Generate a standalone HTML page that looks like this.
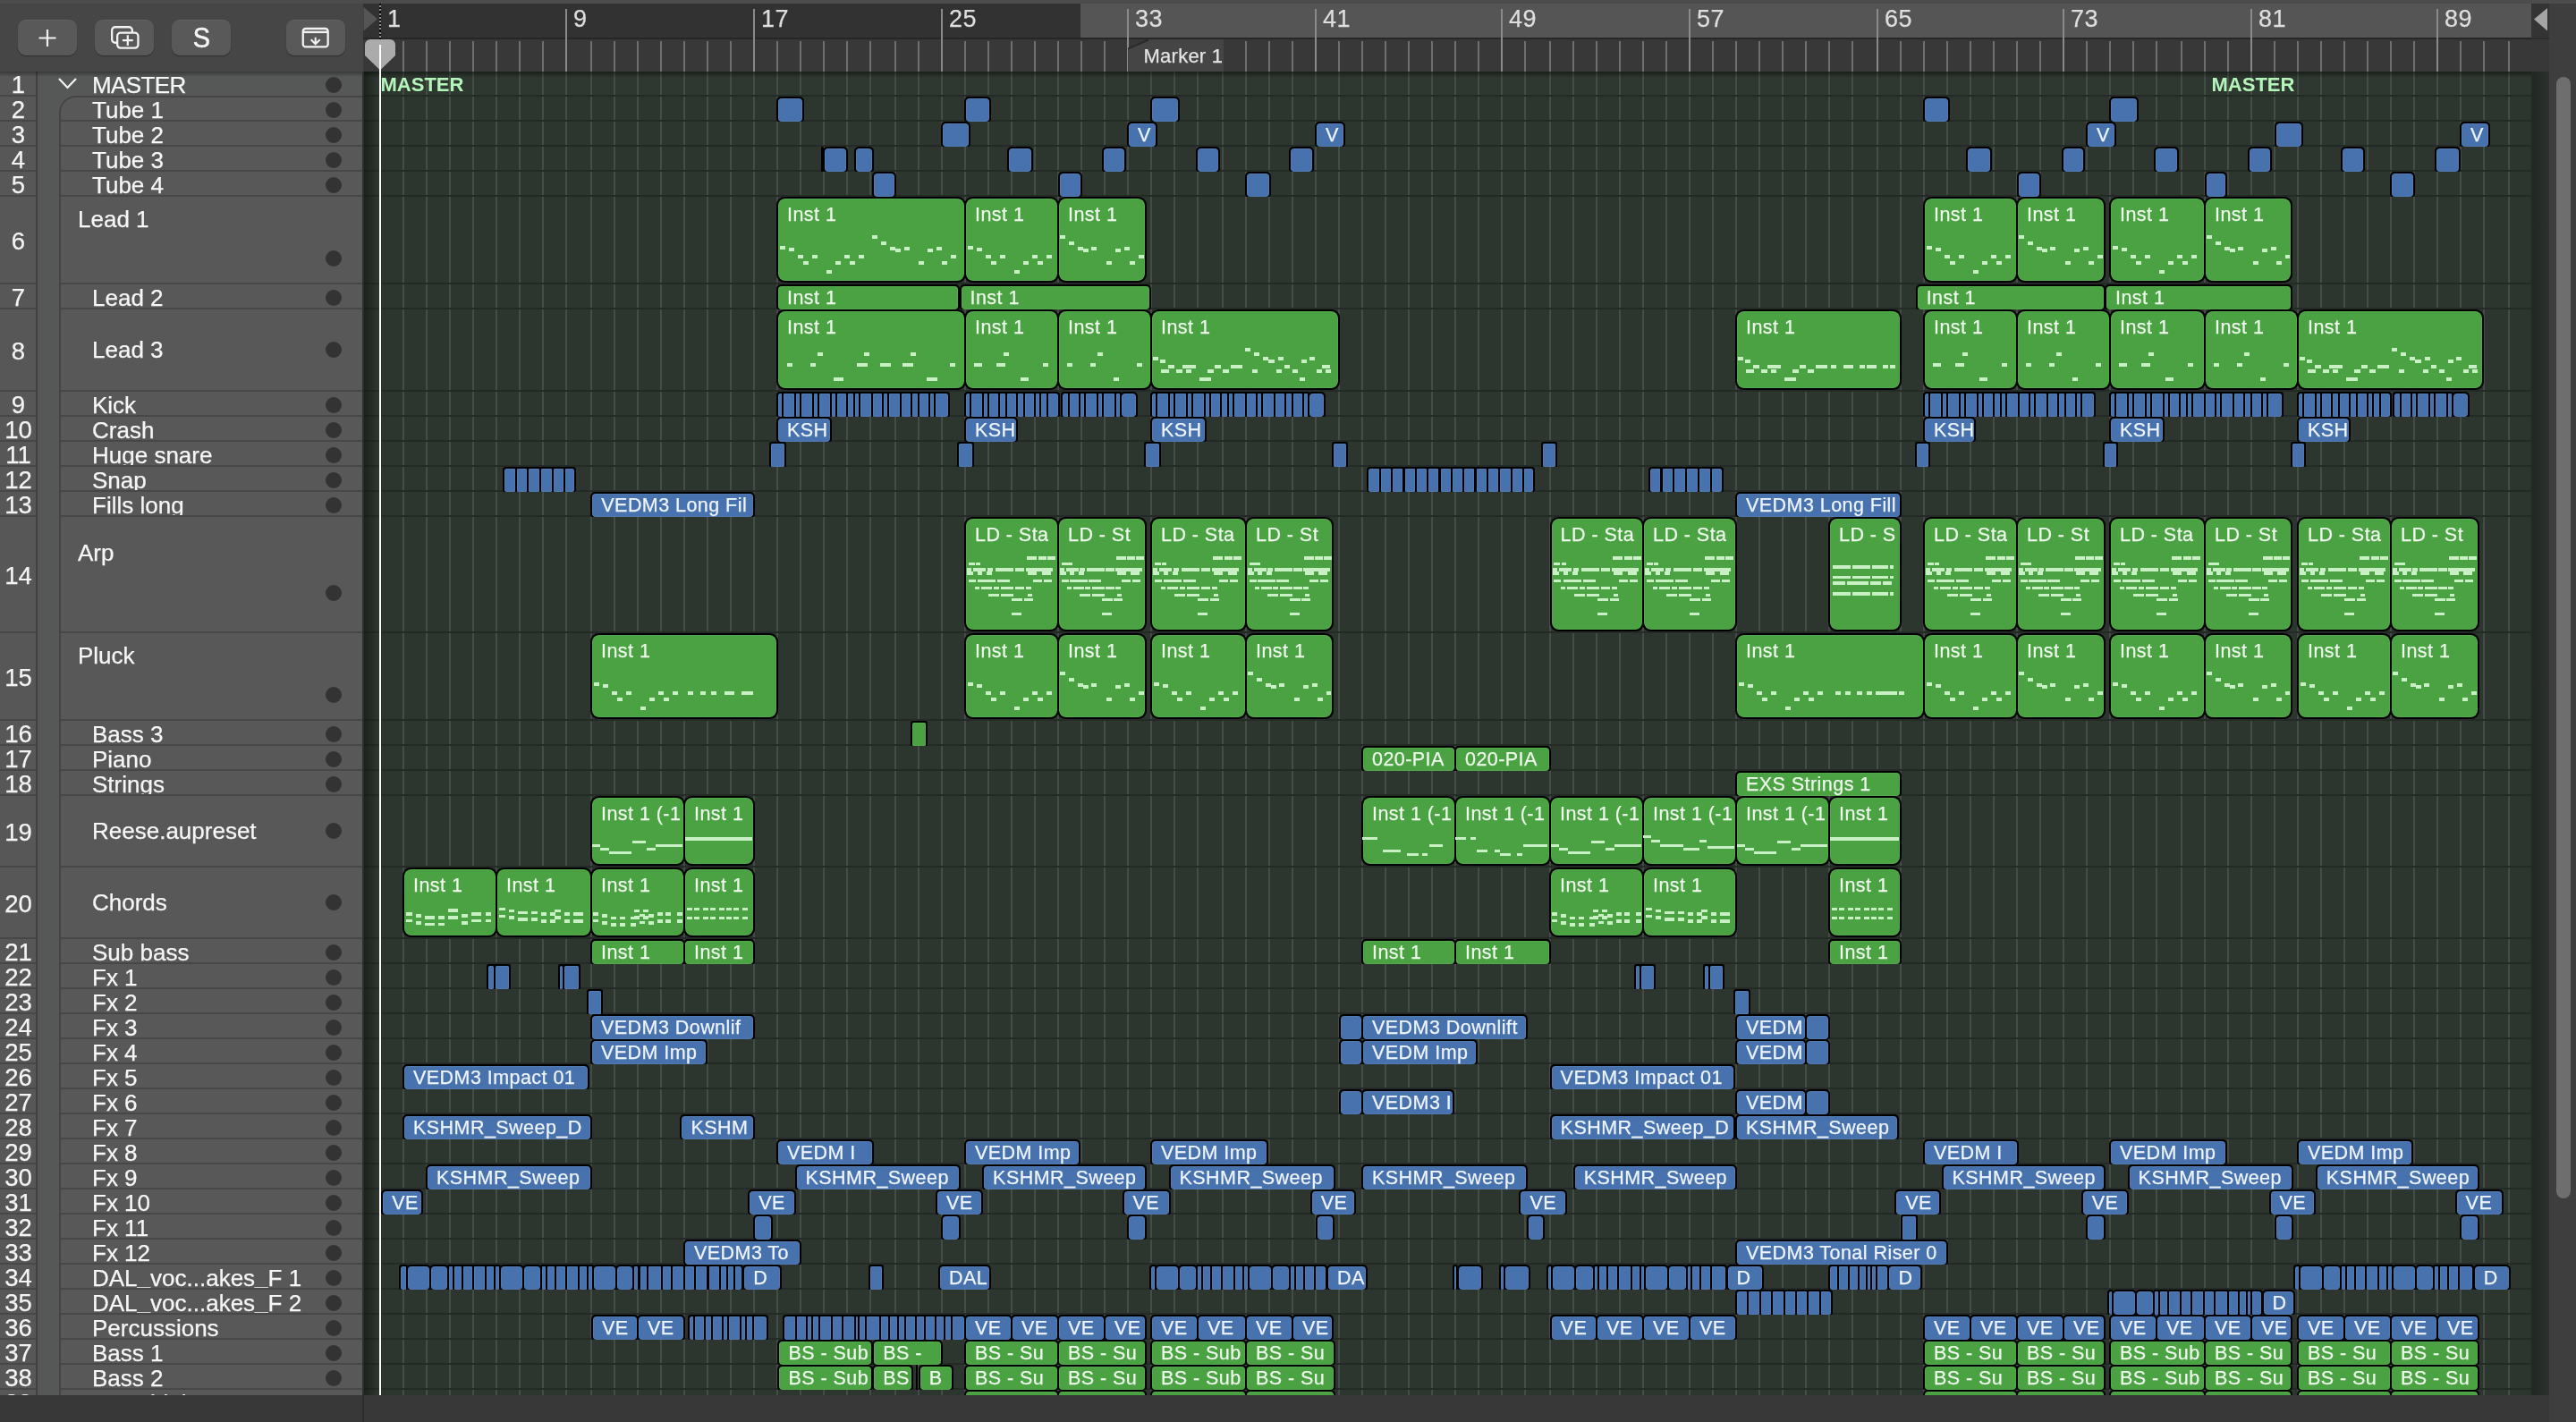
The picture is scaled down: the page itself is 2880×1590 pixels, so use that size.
<!DOCTYPE html><html><head><meta charset="utf-8"><title>Tracks</title><style>
*{margin:0;padding:0;box-sizing:border-box}
html,body{width:2880px;height:1590px;overflow:hidden;background:#383838}
body{position:relative;-webkit-text-stroke:.25px;will-change:transform;-webkit-font-smoothing:antialiased;font-family:"Liberation Sans",sans-serif;color:#f2f2f2}
div,i,b,s,u{position:absolute;display:block;font-style:normal;font-weight:normal;text-decoration:none}
#tl{left:406px;top:80px;width:2424px;height:1480px;background:#2c352e;overflow:hidden}
.v{top:0;width:2px;height:1480px;background:#434d45}
.h{left:0;width:2424px;height:2px;background:#242b26}
.r{background:#000;border-radius:5px 5px 3px 3px;overflow:hidden}
.r>i{left:2px;right:2px;top:2px;bottom:0;border-radius:4px;background:#4872ad;box-shadow:inset 0 0 0 1px rgba(255,255,255,.06)}
.r.g>i{background:#4ba243}
.r.c{border-radius:2.5px 2.5px 1.5px 1.5px}
.r.t{border-radius:9px}
.r.t>i{left:2px;right:2px;top:2px;bottom:2px;border-radius:8px}
.r>b{left:12px;top:1px;height:27px;line-height:28px;font-size:21.5px;letter-spacing:.45px;white-space:nowrap;color:#eef4fc}
.r.g>b{color:#eefaec}
.r.t>b{top:6px}
.r>u{background:#c8f0c4;height:4px}
#hd{left:0;top:80px;width:406px;height:1480px;background:#575757;overflow:hidden}
.n{left:0;width:41px;text-align:center;font-size:27.5px;letter-spacing:0;color:#f4f4f4;white-space:nowrap}
.nm{font-size:26px;letter-spacing:0;color:#f6f6f6;white-space:nowrap;overflow:hidden}
.dot{left:364px;width:18px;height:18px;border-radius:9px;background:#333}
.hl{height:2px;background:#474747}
.btn{top:22px;width:66px;height:40px;border-radius:9px;background:#595959;box-shadow:0 1px 1px rgba(0,0,0,.35),inset 0 1px 0 rgba(255,255,255,.06)}
.rn{top:5.5px;font-size:27px;color:#dedede;letter-spacing:.5px}
.tk{top:46px;width:2px;height:34px;background:#6f6f6f}
.tK{top:10px;width:2px;height:70px;background:#8a8a8a}
</style></head><body><div style="left:0;top:0;width:2880px;height:80px;background:#464646"></div><div style="left:0;top:0;width:2880px;height:4px;background:#4c4c4c"></div><div class="btn" style="left:20px"><svg width="66" height="40" viewBox="0 0 66 40"><path d="M33 11v19M23.5 20.500h19" stroke="#f0f0f0" stroke-width="2.200" fill="none"/></svg></div><div class="btn" style="left:106px"><svg width="66" height="40" viewBox="0 0 66 40"><g stroke="#f2f2f2" stroke-width="2.300" fill="none"><rect x="19.150" y="8.250" width="22.700" height="17.500" rx="3.600"/><rect x="25.150" y="14.650" width="23.300" height="17" rx="3.600" fill="#595959"/><path d="M36.800 17.300v11.800M30.900 23.200h11.800" stroke-width="2.200"/></g></svg></div><div class="btn" style="left:192px;text-align:center;line-height:41px;font-size:31px;color:#f6f6f6;-webkit-text-stroke:.55px"><span style="display:inline-block;transform:scaleX(.93)">S</span></div><div class="btn" style="left:320px"><svg width="66" height="40" viewBox="0 0 66 40"><g stroke="#f2f2f2" stroke-width="2.300" fill="none"><rect x="18.750" y="10" width="27.900" height="20.400" rx="3"/><path d="M18.750 13.900h27.900" stroke-width="2.400"/><path d="M32.700 19.800v7M27.700 22.300l5 5 5-5" stroke-width="2.100"/></g></svg></div><div style="left:406px;top:4px;width:2424px;height:39px;background:#323232"></div><div style="left:1208px;top:4px;width:1622px;height:39px;background:#555"></div><div style="left:406px;top:42px;width:2444px;height:2px;background:#272727"></div><div style="left:406px;top:44px;width:2444px;height:36px;background:#383838"></div><div style="left:2830px;top:4px;width:20px;height:39px;background:#343434"></div><div style="left:2850px;top:4px;width:30px;height:1586px;background:#3e3e3e"></div><div class="rn" style="left:433px">1</div><div class="tk" style="left:450px"></div><div class="tk" style="left:476px"></div><div class="tk" style="left:502px"></div><div class="tk" style="left:528px"></div><div class="tk" style="left:554px"></div><div class="tk" style="left:580px"></div><div class="tk" style="left:606px"></div><div class="tK" style="left:632px"></div><div class="rn" style="left:641px">9</div><div class="tk" style="left:660px"></div><div class="tk" style="left:686px"></div><div class="tk" style="left:712px"></div><div class="tk" style="left:738px"></div><div class="tk" style="left:764px"></div><div class="tk" style="left:790px"></div><div class="tk" style="left:816px"></div><div class="tK" style="left:842px"></div><div class="rn" style="left:851px">17</div><div class="tk" style="left:868px"></div><div class="tk" style="left:894px"></div><div class="tk" style="left:920px"></div><div class="tk" style="left:946px"></div><div class="tk" style="left:972px"></div><div class="tk" style="left:1000px"></div><div class="tk" style="left:1026px"></div><div class="tK" style="left:1052px"></div><div class="rn" style="left:1061px">25</div><div class="tk" style="left:1078px"></div><div class="tk" style="left:1104px"></div><div class="tk" style="left:1130px"></div><div class="tk" style="left:1156px"></div><div class="tk" style="left:1182px"></div><div class="tk" style="left:1208px"></div><div class="tk" style="left:1234px"></div><div class="tK" style="left:1260px"></div><div class="rn" style="left:1269px">33</div><div class="tk" style="left:1286px"></div><div class="tk" style="left:1312px"></div><div class="tk" style="left:1338px"></div><div class="tk" style="left:1366px"></div><div class="tk" style="left:1392px"></div><div class="tk" style="left:1418px"></div><div class="tk" style="left:1444px"></div><div class="tK" style="left:1470px"></div><div class="rn" style="left:1479px">41</div><div class="tk" style="left:1496px"></div><div class="tk" style="left:1522px"></div><div class="tk" style="left:1548px"></div><div class="tk" style="left:1574px"></div><div class="tk" style="left:1600px"></div><div class="tk" style="left:1626px"></div><div class="tk" style="left:1652px"></div><div class="tK" style="left:1678px"></div><div class="rn" style="left:1687px">49</div><div class="tk" style="left:1704px"></div><div class="tk" style="left:1732px"></div><div class="tk" style="left:1758px"></div><div class="tk" style="left:1784px"></div><div class="tk" style="left:1810px"></div><div class="tk" style="left:1836px"></div><div class="tk" style="left:1862px"></div><div class="tK" style="left:1888px"></div><div class="rn" style="left:1897px">57</div><div class="tk" style="left:1914px"></div><div class="tk" style="left:1940px"></div><div class="tk" style="left:1966px"></div><div class="tk" style="left:1992px"></div><div class="tk" style="left:2018px"></div><div class="tk" style="left:2044px"></div><div class="tk" style="left:2070px"></div><div class="tK" style="left:2098px"></div><div class="rn" style="left:2107px">65</div><div class="tk" style="left:2124px"></div><div class="tk" style="left:2150px"></div><div class="tk" style="left:2176px"></div><div class="tk" style="left:2202px"></div><div class="tk" style="left:2228px"></div><div class="tk" style="left:2254px"></div><div class="tk" style="left:2280px"></div><div class="tK" style="left:2306px"></div><div class="rn" style="left:2315px">73</div><div class="tk" style="left:2332px"></div><div class="tk" style="left:2358px"></div><div class="tk" style="left:2384px"></div><div class="tk" style="left:2410px"></div><div class="tk" style="left:2438px"></div><div class="tk" style="left:2464px"></div><div class="tk" style="left:2490px"></div><div class="tK" style="left:2516px"></div><div class="rn" style="left:2525px">81</div><div class="tk" style="left:2542px"></div><div class="tk" style="left:2568px"></div><div class="tk" style="left:2594px"></div><div class="tk" style="left:2620px"></div><div class="tk" style="left:2646px"></div><div class="tk" style="left:2672px"></div><div class="tk" style="left:2698px"></div><div class="tK" style="left:2724px"></div><div class="rn" style="left:2733px">89</div><div class="tk" style="left:2750px"></div><div class="tk" style="left:2776px"></div><div class="tk" style="left:2804px"></div><div style="left:1261px;top:44px;width:107px;height:36px;background:#454545;clip-path:polygon(0 10px,22px 0,100% 0,100% 100%,0 100%)"></div><svg style="position:absolute;left:1261px;top:42px" width="30" height="14"><path d="M0 12.500L23 2.500" stroke="#2a2a2a" stroke-width="2" fill="none"/></svg><div style="left:1278.5px;top:48px;font-size:22px;letter-spacing:.25px;color:#e4e4e4;line-height:30px;white-space:nowrap">Marker 1</div><svg style="position:absolute;left:406px;top:6px" width="20" height="34"><path d="M0.500 2L16 15.200L0.500 28.500z" fill="#555"/></svg><div style="left:424px;top:4px;width:2px;height:40px;background:repeating-linear-gradient(#0c0c0c 0 2.200px,#8c8c8c 2.200px 4.200px)"></div><svg style="position:absolute;left:2830px;top:6px" width="20" height="34"><path d="M18 3L3 15.500L18 28.500z" fill="#a4a4a4"/></svg><div id="tl"><div style="left:0;top:0;width:2424px;height:27px;background:#2e3830"></div><div class="v" style="left:18px"></div><div class="v" style="left:44px"></div><div class="v" style="left:70px"></div><div class="v" style="left:96px"></div><div class="v" style="left:122px"></div><div class="v" style="left:148px"></div><div class="v" style="left:174px"></div><div class="v" style="left:200px"></div><div class="v" style="left:226px"></div><div class="v" style="left:254px"></div><div class="v" style="left:280px"></div><div class="v" style="left:306px"></div><div class="v" style="left:332px"></div><div class="v" style="left:358px"></div><div class="v" style="left:384px"></div><div class="v" style="left:410px"></div><div class="v" style="left:436px"></div><div class="v" style="left:462px"></div><div class="v" style="left:488px"></div><div class="v" style="left:514px"></div><div class="v" style="left:540px"></div><div class="v" style="left:566px"></div><div class="v" style="left:594px"></div><div class="v" style="left:620px"></div><div class="v" style="left:646px"></div><div class="v" style="left:672px"></div><div class="v" style="left:698px"></div><div class="v" style="left:724px"></div><div class="v" style="left:750px"></div><div class="v" style="left:776px"></div><div class="v" style="left:802px"></div><div class="v" style="left:828px"></div><div class="v" style="left:854px"></div><div class="v" style="left:880px"></div><div class="v" style="left:906px"></div><div class="v" style="left:932px"></div><div class="v" style="left:960px"></div><div class="v" style="left:986px"></div><div class="v" style="left:1012px"></div><div class="v" style="left:1038px"></div><div class="v" style="left:1064px"></div><div class="v" style="left:1090px"></div><div class="v" style="left:1116px"></div><div class="v" style="left:1142px"></div><div class="v" style="left:1168px"></div><div class="v" style="left:1194px"></div><div class="v" style="left:1220px"></div><div class="v" style="left:1246px"></div><div class="v" style="left:1272px"></div><div class="v" style="left:1298px"></div><div class="v" style="left:1326px"></div><div class="v" style="left:1352px"></div><div class="v" style="left:1378px"></div><div class="v" style="left:1404px"></div><div class="v" style="left:1430px"></div><div class="v" style="left:1456px"></div><div class="v" style="left:1482px"></div><div class="v" style="left:1508px"></div><div class="v" style="left:1534px"></div><div class="v" style="left:1560px"></div><div class="v" style="left:1586px"></div><div class="v" style="left:1612px"></div><div class="v" style="left:1638px"></div><div class="v" style="left:1664px"></div><div class="v" style="left:1692px"></div><div class="v" style="left:1718px"></div><div class="v" style="left:1744px"></div><div class="v" style="left:1770px"></div><div class="v" style="left:1796px"></div><div class="v" style="left:1822px"></div><div class="v" style="left:1848px"></div><div class="v" style="left:1874px"></div><div class="v" style="left:1900px"></div><div class="v" style="left:1926px"></div><div class="v" style="left:1952px"></div><div class="v" style="left:1978px"></div><div class="v" style="left:2004px"></div><div class="v" style="left:2032px"></div><div class="v" style="left:2058px"></div><div class="v" style="left:2084px"></div><div class="v" style="left:2110px"></div><div class="v" style="left:2136px"></div><div class="v" style="left:2162px"></div><div class="v" style="left:2188px"></div><div class="v" style="left:2214px"></div><div class="v" style="left:2240px"></div><div class="v" style="left:2266px"></div><div class="v" style="left:2292px"></div><div class="v" style="left:2318px"></div><div class="v" style="left:2344px"></div><div class="v" style="left:2370px"></div><div class="v" style="left:2398px"></div><div class="v" style="left:2424px"></div><div class="h" style="top:26px"></div><div class="h" style="top:54px"></div><div class="h" style="top:82px"></div><div class="h" style="top:110px"></div><div class="h" style="top:138px"></div><div class="h" style="top:236px"></div><div class="h" style="top:264px"></div><div class="h" style="top:356px"></div><div class="h" style="top:384px"></div><div class="h" style="top:412px"></div><div class="h" style="top:440px"></div><div class="h" style="top:468px"></div><div class="h" style="top:496px"></div><div class="h" style="top:626px"></div><div class="h" style="top:724px"></div><div class="h" style="top:752px"></div><div class="h" style="top:780px"></div><div class="h" style="top:808px"></div><div class="h" style="top:888px"></div><div class="h" style="top:968px"></div><div class="h" style="top:996px"></div><div class="h" style="top:1024px"></div><div class="h" style="top:1052px"></div><div class="h" style="top:1080px"></div><div class="h" style="top:1108px"></div><div class="h" style="top:1136px"></div><div class="h" style="top:1164px"></div><div class="h" style="top:1192px"></div><div class="h" style="top:1220px"></div><div class="h" style="top:1248px"></div><div class="h" style="top:1276px"></div><div class="h" style="top:1304px"></div><div class="h" style="top:1332px"></div><div class="h" style="top:1360px"></div><div class="h" style="top:1388px"></div><div class="h" style="top:1416px"></div><div class="h" style="top:1444px"></div><div class="h" style="top:1472px"></div><div class="r" style="left:462px;top:28px;width:31.1px;height:28px"><i></i></div><div class="r" style="left:672px;top:28px;width:30.2px;height:28px"><i></i></div><div class="r" style="left:880px;top:28px;width:32.6px;height:28px"><i></i></div><div class="r" style="left:1744px;top:28px;width:30px;height:28px"><i></i></div><div class="r" style="left:1952px;top:28px;width:32.5px;height:28px"><i></i></div><div class="r" style="left:646.4px;top:56px;width:32.3px;height:28px"><i></i></div><div class="r" style="left:854px;top:56px;width:33.8px;height:28px"><i></i><b>V</b></div><div class="r" style="left:1064px;top:56px;width:34.3px;height:28px"><i></i><b>V</b></div><div class="r" style="left:1926px;top:56px;width:33.6px;height:28px"><i></i><b>V</b></div><div class="r" style="left:2136.7px;top:56px;width:32px;height:28px"><i></i></div><div class="r" style="left:2344px;top:56px;width:33.9px;height:28px"><i></i><b>V</b></div><div class="r c" style="left:512.3px;top:84px;width:2.5px;height:28px"><i style="border-radius:1.500px"></i></div><div class="r" style="left:514.4px;top:84px;width:27.6px;height:28px"><i></i></div><div class="r" style="left:548.9px;top:84px;width:21.8px;height:28px"><i></i></div><div class="r" style="left:720.4px;top:84px;width:28.9px;height:28px"><i></i></div><div class="r" style="left:826px;top:84px;width:26.5px;height:28px"><i></i></div><div class="r" style="left:930.6px;top:84px;width:27.8px;height:28px"><i></i></div><div class="r" style="left:1035.1px;top:84px;width:27.8px;height:28px"><i></i></div><div class="r" style="left:1792.2px;top:84px;width:28.9px;height:28px"><i></i></div><div class="r" style="left:1898.6px;top:84px;width:26px;height:28px"><i></i></div><div class="r" style="left:2002.4px;top:84px;width:27.8px;height:28px"><i></i></div><div class="r" style="left:2106.9px;top:84px;width:26.8px;height:28px"><i></i></div><div class="r" style="left:2210.5px;top:84px;width:27.8px;height:28px"><i></i></div><div class="r" style="left:2316.1px;top:84px;width:28.6px;height:28px"><i></i></div><div class="r" style="left:569px;top:112px;width:27px;height:28px"><i></i></div><div class="r" style="left:777.1px;top:112px;width:26.9px;height:28px"><i></i></div><div class="r" style="left:986.2px;top:112px;width:28.4px;height:28px"><i></i></div><div class="r" style="left:1848.9px;top:112px;width:27.1px;height:28px"><i></i></div><div class="r" style="left:2058.8px;top:112px;width:25.5px;height:28px"><i></i></div><div class="r" style="left:2266px;top:112px;width:28px;height:28px"><i></i></div><div class="r g t" style="left:462px;top:140px;width:212px;height:96px"><i></i><b>Inst 1</b><u style="left:4px;top:55px;width:6px"></u><u style="left:14px;top:57px;width:6px"></u><u style="left:24px;top:65px;width:6px"></u><u style="left:30px;top:72px;width:6px"></u><u style="left:40px;top:65px;width:6px"></u><u style="left:56px;top:82px;width:6px"></u><u style="left:66px;top:72px;width:6px"></u><u style="left:76px;top:65px;width:6px"></u><u style="left:82px;top:72px;width:6px"></u><u style="left:92px;top:65px;width:6px"></u><u style="left:107.1px;top:43px;width:6px"></u><u style="left:117.1px;top:50px;width:6px"></u><u style="left:127.1px;top:56px;width:6px"></u><u style="left:133.3px;top:58px;width:6px"></u><u style="left:142.8px;top:56px;width:6px"></u><u style="left:159.1px;top:72px;width:6px"></u><u style="left:169.1px;top:58px;width:6px"></u><u style="left:179.1px;top:56px;width:6px"></u><u style="left:185.1px;top:72px;width:6px"></u><u style="left:195.1px;top:65px;width:6px"></u></div><div class="r g t" style="left:672px;top:140px;width:106px;height:96px"><i></i><b>Inst 1</b><u style="left:4px;top:55px;width:6px"></u><u style="left:14px;top:57px;width:6px"></u><u style="left:24px;top:65px;width:6px"></u><u style="left:30px;top:72px;width:6px"></u><u style="left:40px;top:65px;width:6px"></u><u style="left:56px;top:82px;width:6px"></u><u style="left:66px;top:72px;width:6px"></u><u style="left:76px;top:65px;width:6px"></u><u style="left:82px;top:72px;width:6px"></u><u style="left:92px;top:65px;width:6px"></u></div><div class="r g t" style="left:776px;top:140px;width:100.3px;height:96px"><i></i><b>Inst 1</b><u style="left:2.5px;top:43px;width:6px"></u><u style="left:12.5px;top:50px;width:6px"></u><u style="left:22.5px;top:56px;width:6px"></u><u style="left:28.8px;top:58px;width:6px"></u><u style="left:38.2px;top:56px;width:6px"></u><u style="left:54.5px;top:72px;width:6px"></u><u style="left:64.5px;top:58px;width:6px"></u><u style="left:74.5px;top:56px;width:6px"></u><u style="left:80.5px;top:72px;width:6px"></u><u style="left:90.5px;top:65px;width:6px"></u></div><div class="r g t" style="left:1744px;top:140px;width:106px;height:96px"><i></i><b>Inst 1</b><u style="left:4px;top:55px;width:6px"></u><u style="left:14px;top:57px;width:6px"></u><u style="left:24px;top:65px;width:6px"></u><u style="left:30px;top:72px;width:6px"></u><u style="left:40px;top:65px;width:6px"></u><u style="left:56px;top:82px;width:6px"></u><u style="left:66px;top:72px;width:6px"></u><u style="left:76px;top:65px;width:6px"></u><u style="left:82px;top:72px;width:6px"></u><u style="left:92px;top:65px;width:6px"></u></div><div class="r g t" style="left:1848px;top:140px;width:100.1px;height:96px"><i></i><b>Inst 1</b><u style="left:2.5px;top:43px;width:6px"></u><u style="left:12.5px;top:50px;width:6px"></u><u style="left:22.5px;top:56px;width:6px"></u><u style="left:28.8px;top:58px;width:6px"></u><u style="left:38.2px;top:56px;width:6px"></u><u style="left:54.5px;top:72px;width:6px"></u><u style="left:64.5px;top:58px;width:6px"></u><u style="left:74.5px;top:56px;width:6px"></u><u style="left:80.5px;top:72px;width:6px"></u><u style="left:90.5px;top:65px;width:6px"></u></div><div class="r g t" style="left:1952px;top:140px;width:108px;height:96px"><i></i><b>Inst 1</b><u style="left:4px;top:55px;width:6px"></u><u style="left:14px;top:57px;width:6px"></u><u style="left:24px;top:65px;width:6px"></u><u style="left:30px;top:72px;width:6px"></u><u style="left:40px;top:65px;width:6px"></u><u style="left:56px;top:82px;width:6px"></u><u style="left:66px;top:72px;width:6px"></u><u style="left:76px;top:65px;width:6px"></u><u style="left:82px;top:72px;width:6px"></u><u style="left:92px;top:65px;width:6px"></u></div><div class="r g t" style="left:2058px;top:140px;width:99.3px;height:96px"><i></i><b>Inst 1</b><u style="left:2.5px;top:43px;width:6px"></u><u style="left:12.5px;top:50px;width:6px"></u><u style="left:22.5px;top:56px;width:6px"></u><u style="left:28.8px;top:58px;width:6px"></u><u style="left:38.2px;top:56px;width:6px"></u><u style="left:54.5px;top:72px;width:6px"></u><u style="left:64.5px;top:58px;width:6px"></u><u style="left:74.5px;top:56px;width:6px"></u><u style="left:80.5px;top:72px;width:6px"></u><u style="left:90.5px;top:65px;width:5.8px"></u></div><div class="r g" style="left:462px;top:238px;width:205.4px;height:28px"><i></i><b>Inst 1</b></div><div class="r g" style="left:666.5px;top:238px;width:214.8px;height:28px"><i></i><b>Inst 1</b></div><div class="r g" style="left:1735.7px;top:238px;width:212.4px;height:28px"><i></i><b>Inst 1</b></div><div class="r g" style="left:1947px;top:238px;width:210.3px;height:28px"><i></i><b>Inst 1</b></div><div class="r g t" style="left:462px;top:266px;width:212px;height:90px"><i></i><b>Inst 1</b><u style="left:11.8px;top:59.5px;width:6px"></u><u style="left:37.5px;top:59.5px;width:6px"></u><u style="left:45.5px;top:47.8px;width:6px"></u><u style="left:63.8px;top:75.8px;width:11px"></u><u style="left:89.5px;top:59.5px;width:12px"></u><u style="left:97.5px;top:47.8px;width:6px"></u><u style="left:115.5px;top:59.5px;width:12px"></u><u style="left:141px;top:59.5px;width:12px"></u><u style="left:149.5px;top:47.8px;width:6px"></u><u style="left:167.5px;top:75.8px;width:12px"></u><u style="left:193.5px;top:59.5px;width:6px"></u></div><div class="r g t" style="left:672px;top:266px;width:106px;height:90px"><i></i><b>Inst 1</b><u style="left:10.5px;top:59.5px;width:9.5px"></u><u style="left:36px;top:59.5px;width:10px"></u><u style="left:44px;top:47.8px;width:6px"></u><u style="left:62.5px;top:75.8px;width:9.5px"></u><u style="left:88px;top:59.5px;width:6px"></u></div><div class="r g t" style="left:776px;top:266px;width:106px;height:90px"><i></i><b>Inst 1</b><u style="left:10.8px;top:59.5px;width:6px"></u><u style="left:36.5px;top:59.5px;width:6px"></u><u style="left:44.5px;top:47.8px;width:6px"></u><u style="left:62.5px;top:75.8px;width:6px"></u><u style="left:88.5px;top:59.5px;width:6px"></u></div><div class="r g t" style="left:880px;top:266px;width:212px;height:90px"><i></i><b>Inst 1</b><u style="left:3px;top:52.5px;width:6px"></u><u style="left:11px;top:55.5px;width:6px"></u><u style="left:12px;top:67.4px;width:9px"></u><u style="left:20px;top:62px;width:7px"></u><u style="left:29px;top:67.4px;width:7px"></u><u style="left:36px;top:62px;width:15px"></u><u style="left:40px;top:67.4px;width:6px"></u><u style="left:55px;top:75.6px;width:13px"></u><u style="left:64px;top:67.4px;width:7px"></u><u style="left:72px;top:62px;width:7px"></u><u style="left:81px;top:67.4px;width:7px"></u><u style="left:90px;top:62px;width:13px"></u><u style="left:106px;top:43px;width:6px"></u><u style="left:116px;top:48px;width:6px"></u><u style="left:114px;top:67.4px;width:6px"></u><u style="left:126px;top:52.5px;width:6px"></u><u style="left:132px;top:55.5px;width:7px"></u><u style="left:143px;top:52.5px;width:6px"></u><u style="left:141px;top:67.4px;width:6px"></u><u style="left:150px;top:62px;width:6px"></u><u style="left:159px;top:67.4px;width:6px"></u><u style="left:167px;top:75.6px;width:6px"></u><u style="left:169px;top:55.5px;width:6px"></u><u style="left:178px;top:52.5px;width:6px"></u><u style="left:186px;top:67.4px;width:6px"></u><u style="left:192px;top:62px;width:9px"></u><u style="left:196px;top:67.4px;width:6px"></u></div><div class="r g t" style="left:1534px;top:266px;width:186.4px;height:90px"><i></i><b>Inst 1</b><u style="left:3px;top:52.5px;width:6px"></u><u style="left:11px;top:55.5px;width:6px"></u><u style="left:12px;top:67.4px;width:9px"></u><u style="left:20px;top:62px;width:7px"></u><u style="left:29px;top:67.4px;width:7px"></u><u style="left:36px;top:62px;width:15px"></u><u style="left:40px;top:67.4px;width:6px"></u><u style="left:55px;top:75.6px;width:13px"></u><u style="left:64px;top:67.4px;width:7px"></u><u style="left:72px;top:62px;width:7px"></u><u style="left:81px;top:67.4px;width:7px"></u><u style="left:90px;top:62px;width:13px"></u><u style="left:107px;top:62px;width:6px"></u><u style="left:121px;top:62px;width:11px"></u><u style="left:139px;top:62px;width:6px"></u><u style="left:147px;top:62px;width:11px"></u><u style="left:165px;top:62px;width:6px"></u><u style="left:173px;top:62px;width:6px"></u></div><div class="r g t" style="left:1744px;top:266px;width:106px;height:90px"><i></i><b>Inst 1</b><u style="left:10.5px;top:59.5px;width:9.5px"></u><u style="left:36px;top:59.5px;width:10px"></u><u style="left:44px;top:47.8px;width:6px"></u><u style="left:62.5px;top:75.8px;width:9.5px"></u><u style="left:88px;top:59.5px;width:6px"></u></div><div class="r g t" style="left:1848px;top:266px;width:106px;height:90px"><i></i><b>Inst 1</b><u style="left:10.8px;top:59.5px;width:6px"></u><u style="left:36.5px;top:59.5px;width:6px"></u><u style="left:44.5px;top:47.8px;width:6px"></u><u style="left:62.5px;top:75.8px;width:6px"></u><u style="left:88.5px;top:59.5px;width:6px"></u></div><div class="r g t" style="left:1952px;top:266px;width:108px;height:90px"><i></i><b>Inst 1</b><u style="left:10.5px;top:59.5px;width:9.5px"></u><u style="left:36px;top:59.5px;width:10px"></u><u style="left:44px;top:47.8px;width:6px"></u><u style="left:62.5px;top:75.8px;width:9.5px"></u><u style="left:88px;top:59.5px;width:6px"></u></div><div class="r g t" style="left:2058px;top:266px;width:106px;height:90px"><i></i><b>Inst 1</b><u style="left:10.8px;top:59.5px;width:6px"></u><u style="left:36.5px;top:59.5px;width:6px"></u><u style="left:44.5px;top:47.8px;width:6px"></u><u style="left:62.5px;top:75.8px;width:6px"></u><u style="left:88.5px;top:59.5px;width:6px"></u></div><div class="r g t" style="left:2162px;top:266px;width:209.4px;height:90px"><i></i><b>Inst 1</b><u style="left:3px;top:52.5px;width:6px"></u><u style="left:11px;top:55.5px;width:6px"></u><u style="left:12px;top:67.4px;width:9px"></u><u style="left:20px;top:62px;width:7px"></u><u style="left:29px;top:67.4px;width:7px"></u><u style="left:36px;top:62px;width:15px"></u><u style="left:40px;top:67.4px;width:6px"></u><u style="left:55px;top:75.6px;width:13px"></u><u style="left:64px;top:67.4px;width:7px"></u><u style="left:72px;top:62px;width:7px"></u><u style="left:81px;top:67.4px;width:7px"></u><u style="left:90px;top:62px;width:13px"></u><u style="left:106px;top:43px;width:6px"></u><u style="left:116px;top:48px;width:6px"></u><u style="left:114px;top:67.4px;width:6px"></u><u style="left:126px;top:52.5px;width:6px"></u><u style="left:132px;top:55.5px;width:7px"></u><u style="left:143px;top:52.5px;width:6px"></u><u style="left:141px;top:67.4px;width:6px"></u><u style="left:150px;top:62px;width:6px"></u><u style="left:159px;top:67.4px;width:6px"></u><u style="left:167px;top:75.6px;width:6px"></u><u style="left:169px;top:55.5px;width:6px"></u><u style="left:178px;top:52.5px;width:6px"></u><u style="left:186px;top:67.4px;width:6px"></u><u style="left:192px;top:62px;width:9px"></u><u style="left:196px;top:67.4px;width:6px"></u></div><div class="r" style="left:462px;top:386px;width:62.4px;height:28px"><i></i><b>KSH</b></div><div class="r" style="left:672px;top:386px;width:60.3px;height:28px"><i></i><b>KSH</b></div><div class="r" style="left:880px;top:386px;width:62.7px;height:28px"><i></i><b>KSH</b></div><div class="r" style="left:1744px;top:386px;width:59.3px;height:28px"><i></i><b>KSH</b></div><div class="r" style="left:1952px;top:386px;width:62px;height:28px"><i></i><b>KSH</b></div><div class="r" style="left:2162px;top:386px;width:59.6px;height:28px"><i></i><b>KSH</b></div><div class="r c" style="left:453.7px;top:414px;width:19.5px;height:28px"><i style="border-radius:1.500px"></i></div><div class="r c" style="left:663.9px;top:414px;width:19px;height:28px"><i style="border-radius:1.500px"></i></div><div class="r c" style="left:872.5px;top:414px;width:19px;height:28px"><i style="border-radius:1.500px"></i></div><div class="r c" style="left:1082.7px;top:414px;width:18.4px;height:28px"><i style="border-radius:1.500px"></i></div><div class="r c" style="left:1316.7px;top:414px;width:18.2px;height:28px"><i style="border-radius:1.500px"></i></div><div class="r c" style="left:1735.2px;top:414px;width:16.9px;height:28px"><i style="border-radius:1.500px"></i></div><div class="r c" style="left:1944.9px;top:414px;width:16.9px;height:28px"><i style="border-radius:1.500px"></i></div><div class="r c" style="left:2154.5px;top:414px;width:17.4px;height:28px"><i style="border-radius:1.500px"></i></div><div class="r" style="left:254.3px;top:470px;width:183.7px;height:28px"><i></i><b>VEDM3 Long Fil</b></div><div class="r" style="left:1534px;top:470px;width:186.4px;height:28px"><i></i><b>VEDM3 Long Fill</b></div><div class="r g t" style="left:672px;top:498px;width:106px;height:128px"><i></i><b>LD - Sta</b><u style="left:70px;top:44.1px;width:11px;height:3.5px"></u><u style="left:83px;top:44.1px;width:9px;height:3.5px"></u><u style="left:93px;top:44.1px;width:9px;height:3.5px"></u><u style="left:4.7px;top:50.5px;width:7px;height:3.5px"></u><u style="left:13px;top:50.5px;width:5px;height:3.5px"></u><u style="left:3px;top:57.2px;width:5px;height:3.5px"></u><u style="left:10px;top:57.2px;width:14px;height:3.5px"></u><u style="left:26px;top:57.2px;width:6px;height:3.5px"></u><u style="left:35px;top:57.2px;width:20px;height:3.5px"></u><u style="left:57px;top:57.2px;width:10px;height:3.5px"></u><u style="left:69px;top:57.2px;width:30px;height:3.5px"></u><u style="left:3px;top:61px;width:7px;height:3.5px"></u><u style="left:15px;top:61px;width:5px;height:3.5px"></u><u style="left:25px;top:61px;width:6px;height:3.5px"></u><u style="left:71px;top:61px;width:10px;height:3.5px"></u><u style="left:87px;top:61px;width:10px;height:3.5px"></u><u style="left:4.7px;top:69.5px;width:8px;height:3.5px"></u><u style="left:15px;top:69.5px;width:20px;height:3.5px"></u><u style="left:37px;top:69.5px;width:14px;height:3.5px"></u><u style="left:77px;top:69.5px;width:10px;height:3.5px"></u><u style="left:89px;top:69.5px;width:9px;height:3.5px"></u><u style="left:12px;top:77.7px;width:5px;height:3.5px"></u><u style="left:19px;top:77.7px;width:12px;height:3.5px"></u><u style="left:33px;top:77.7px;width:6px;height:3.5px"></u><u style="left:41px;top:77.7px;width:14px;height:3.5px"></u><u style="left:57px;top:77.7px;width:10px;height:3.5px"></u><u style="left:69px;top:77.7px;width:6px;height:3.5px"></u><u style="left:27px;top:85.9px;width:12px;height:3.5px"></u><u style="left:41px;top:85.9px;width:14px;height:3.5px"></u><u style="left:71px;top:85.9px;width:5px;height:3.5px"></u><u style="left:53px;top:90.7px;width:12px;height:3.5px"></u><u style="left:67px;top:90.7px;width:10px;height:3.5px"></u><u style="left:53px;top:106.7px;width:11px;height:3.5px"></u></div><div class="r g t" style="left:776px;top:498px;width:100.3px;height:128px"><i></i><b>LD - St</b><u style="left:65.9px;top:44.1px;width:11px;height:3.5px"></u><u style="left:78.1px;top:44.1px;width:9px;height:3.5px"></u><u style="left:87.5px;top:44.1px;width:9px;height:3.5px"></u><u style="left:4.5px;top:50.5px;width:7px;height:3.5px"></u><u style="left:12.3px;top:50.5px;width:5px;height:3.5px"></u><u style="left:2.9px;top:57.2px;width:5px;height:3.5px"></u><u style="left:9.5px;top:57.2px;width:14px;height:3.5px"></u><u style="left:24.5px;top:57.2px;width:6px;height:3.5px"></u><u style="left:33px;top:57.2px;width:20px;height:3.5px"></u><u style="left:53.6px;top:57.2px;width:10px;height:3.5px"></u><u style="left:64.9px;top:57.2px;width:30px;height:3.5px"></u><u style="left:2.9px;top:61px;width:7px;height:3.5px"></u><u style="left:14.2px;top:61px;width:5px;height:3.5px"></u><u style="left:23.6px;top:61px;width:6px;height:3.5px"></u><u style="left:66.8px;top:61px;width:10px;height:3.5px"></u><u style="left:81.8px;top:61px;width:10px;height:3.5px"></u><u style="left:4.5px;top:69.5px;width:8px;height:3.5px"></u><u style="left:14.2px;top:69.5px;width:20px;height:3.5px"></u><u style="left:34.8px;top:69.5px;width:14px;height:3.5px"></u><u style="left:72.4px;top:69.5px;width:10px;height:3.5px"></u><u style="left:83.7px;top:69.5px;width:9px;height:3.5px"></u><u style="left:11.3px;top:77.7px;width:5px;height:3.5px"></u><u style="left:17.9px;top:77.7px;width:12px;height:3.5px"></u><u style="left:31.1px;top:77.7px;width:6px;height:3.5px"></u><u style="left:38.6px;top:77.7px;width:14px;height:3.5px"></u><u style="left:53.6px;top:77.7px;width:10px;height:3.5px"></u><u style="left:64.9px;top:77.7px;width:6px;height:3.5px"></u><u style="left:25.4px;top:85.9px;width:12px;height:3.5px"></u><u style="left:38.6px;top:85.9px;width:14px;height:3.5px"></u><u style="left:66.8px;top:85.9px;width:5px;height:3.5px"></u><u style="left:49.9px;top:90.7px;width:12px;height:3.5px"></u><u style="left:63px;top:90.7px;width:10px;height:3.5px"></u><u style="left:49.9px;top:106.7px;width:11px;height:3.5px"></u></div><div class="r g t" style="left:880px;top:498px;width:108px;height:128px"><i></i><b>LD - Sta</b><u style="left:70px;top:44.1px;width:11px;height:3.5px"></u><u style="left:83px;top:44.1px;width:9px;height:3.5px"></u><u style="left:93px;top:44.1px;width:9px;height:3.5px"></u><u style="left:4.7px;top:50.5px;width:7px;height:3.5px"></u><u style="left:13px;top:50.5px;width:5px;height:3.5px"></u><u style="left:3px;top:57.2px;width:5px;height:3.5px"></u><u style="left:10px;top:57.2px;width:14px;height:3.5px"></u><u style="left:26px;top:57.2px;width:6px;height:3.5px"></u><u style="left:35px;top:57.2px;width:20px;height:3.5px"></u><u style="left:57px;top:57.2px;width:10px;height:3.5px"></u><u style="left:69px;top:57.2px;width:30px;height:3.5px"></u><u style="left:3px;top:61px;width:7px;height:3.5px"></u><u style="left:15px;top:61px;width:5px;height:3.5px"></u><u style="left:25px;top:61px;width:6px;height:3.5px"></u><u style="left:71px;top:61px;width:10px;height:3.5px"></u><u style="left:87px;top:61px;width:10px;height:3.5px"></u><u style="left:4.7px;top:69.5px;width:8px;height:3.5px"></u><u style="left:15px;top:69.5px;width:20px;height:3.5px"></u><u style="left:37px;top:69.5px;width:14px;height:3.5px"></u><u style="left:77px;top:69.5px;width:10px;height:3.5px"></u><u style="left:89px;top:69.5px;width:9px;height:3.5px"></u><u style="left:12px;top:77.7px;width:5px;height:3.5px"></u><u style="left:19px;top:77.7px;width:12px;height:3.5px"></u><u style="left:33px;top:77.7px;width:6px;height:3.5px"></u><u style="left:41px;top:77.7px;width:14px;height:3.5px"></u><u style="left:57px;top:77.7px;width:10px;height:3.5px"></u><u style="left:69px;top:77.7px;width:6px;height:3.5px"></u><u style="left:27px;top:85.9px;width:12px;height:3.5px"></u><u style="left:41px;top:85.9px;width:14px;height:3.5px"></u><u style="left:71px;top:85.9px;width:5px;height:3.5px"></u><u style="left:53px;top:90.7px;width:12px;height:3.5px"></u><u style="left:67px;top:90.7px;width:10px;height:3.5px"></u><u style="left:53px;top:106.7px;width:11px;height:3.5px"></u></div><div class="r g t" style="left:986px;top:498px;width:99.4px;height:128px"><i></i><b>LD - St</b><u style="left:65.9px;top:44.1px;width:11px;height:3.5px"></u><u style="left:78.1px;top:44.1px;width:9px;height:3.5px"></u><u style="left:87.5px;top:44.1px;width:9px;height:3.5px"></u><u style="left:4.5px;top:50.5px;width:7px;height:3.5px"></u><u style="left:12.3px;top:50.5px;width:5px;height:3.5px"></u><u style="left:2.9px;top:57.2px;width:5px;height:3.5px"></u><u style="left:9.5px;top:57.2px;width:14px;height:3.5px"></u><u style="left:24.5px;top:57.2px;width:6px;height:3.5px"></u><u style="left:33px;top:57.2px;width:20px;height:3.5px"></u><u style="left:53.6px;top:57.2px;width:10px;height:3.5px"></u><u style="left:64.9px;top:57.2px;width:30px;height:3.5px"></u><u style="left:2.9px;top:61px;width:7px;height:3.5px"></u><u style="left:14.2px;top:61px;width:5px;height:3.5px"></u><u style="left:23.6px;top:61px;width:6px;height:3.5px"></u><u style="left:66.8px;top:61px;width:10px;height:3.5px"></u><u style="left:81.8px;top:61px;width:10px;height:3.5px"></u><u style="left:4.5px;top:69.5px;width:8px;height:3.5px"></u><u style="left:14.2px;top:69.5px;width:20px;height:3.5px"></u><u style="left:34.8px;top:69.5px;width:14px;height:3.5px"></u><u style="left:72.4px;top:69.5px;width:10px;height:3.5px"></u><u style="left:83.7px;top:69.5px;width:9px;height:3.5px"></u><u style="left:11.3px;top:77.7px;width:5px;height:3.5px"></u><u style="left:17.9px;top:77.7px;width:12px;height:3.5px"></u><u style="left:31.1px;top:77.7px;width:6px;height:3.5px"></u><u style="left:38.6px;top:77.7px;width:14px;height:3.5px"></u><u style="left:53.6px;top:77.7px;width:10px;height:3.5px"></u><u style="left:64.9px;top:77.7px;width:6px;height:3.5px"></u><u style="left:25.4px;top:85.9px;width:12px;height:3.5px"></u><u style="left:38.6px;top:85.9px;width:14px;height:3.5px"></u><u style="left:66.8px;top:85.9px;width:5px;height:3.5px"></u><u style="left:49.9px;top:90.7px;width:12px;height:3.5px"></u><u style="left:63px;top:90.7px;width:10px;height:3.5px"></u><u style="left:49.9px;top:106.7px;width:11px;height:3.5px"></u></div><div class="r g t" style="left:1326.6px;top:498px;width:105.4px;height:128px"><i></i><b>LD - Sta</b><u style="left:70px;top:44.1px;width:11px;height:3.5px"></u><u style="left:83px;top:44.1px;width:9px;height:3.5px"></u><u style="left:93px;top:44.1px;width:9px;height:3.5px"></u><u style="left:4.7px;top:50.5px;width:7px;height:3.5px"></u><u style="left:13px;top:50.5px;width:5px;height:3.5px"></u><u style="left:3px;top:57.2px;width:5px;height:3.5px"></u><u style="left:10px;top:57.2px;width:14px;height:3.5px"></u><u style="left:26px;top:57.2px;width:6px;height:3.5px"></u><u style="left:35px;top:57.2px;width:20px;height:3.5px"></u><u style="left:57px;top:57.2px;width:10px;height:3.5px"></u><u style="left:69px;top:57.2px;width:30px;height:3.5px"></u><u style="left:3px;top:61px;width:7px;height:3.5px"></u><u style="left:15px;top:61px;width:5px;height:3.5px"></u><u style="left:25px;top:61px;width:6px;height:3.5px"></u><u style="left:71px;top:61px;width:10px;height:3.5px"></u><u style="left:87px;top:61px;width:10px;height:3.5px"></u><u style="left:4.7px;top:69.5px;width:8px;height:3.5px"></u><u style="left:15px;top:69.5px;width:20px;height:3.5px"></u><u style="left:37px;top:69.5px;width:14px;height:3.5px"></u><u style="left:77px;top:69.5px;width:10px;height:3.5px"></u><u style="left:89px;top:69.5px;width:9px;height:3.5px"></u><u style="left:12px;top:77.7px;width:5px;height:3.5px"></u><u style="left:19px;top:77.7px;width:12px;height:3.5px"></u><u style="left:33px;top:77.7px;width:6px;height:3.5px"></u><u style="left:41px;top:77.7px;width:14px;height:3.5px"></u><u style="left:57px;top:77.7px;width:10px;height:3.5px"></u><u style="left:69px;top:77.7px;width:6px;height:3.5px"></u><u style="left:27px;top:85.9px;width:12px;height:3.5px"></u><u style="left:41px;top:85.9px;width:14px;height:3.5px"></u><u style="left:71px;top:85.9px;width:5px;height:3.5px"></u><u style="left:53px;top:90.7px;width:12px;height:3.5px"></u><u style="left:67px;top:90.7px;width:10px;height:3.5px"></u><u style="left:53px;top:106.7px;width:11px;height:3.5px"></u></div><div class="r g t" style="left:1430px;top:498px;width:106px;height:128px"><i></i><b>LD - Sta</b><u style="left:70px;top:44.1px;width:11px;height:3.5px"></u><u style="left:83px;top:44.1px;width:9px;height:3.5px"></u><u style="left:93px;top:44.1px;width:9px;height:3.5px"></u><u style="left:4.7px;top:50.5px;width:7px;height:3.5px"></u><u style="left:13px;top:50.5px;width:5px;height:3.5px"></u><u style="left:3px;top:57.2px;width:5px;height:3.5px"></u><u style="left:10px;top:57.2px;width:14px;height:3.5px"></u><u style="left:26px;top:57.2px;width:6px;height:3.5px"></u><u style="left:35px;top:57.2px;width:20px;height:3.5px"></u><u style="left:57px;top:57.2px;width:10px;height:3.5px"></u><u style="left:69px;top:57.2px;width:30px;height:3.5px"></u><u style="left:3px;top:61px;width:7px;height:3.5px"></u><u style="left:15px;top:61px;width:5px;height:3.5px"></u><u style="left:25px;top:61px;width:6px;height:3.5px"></u><u style="left:71px;top:61px;width:10px;height:3.5px"></u><u style="left:87px;top:61px;width:10px;height:3.5px"></u><u style="left:4.7px;top:69.5px;width:8px;height:3.5px"></u><u style="left:15px;top:69.5px;width:20px;height:3.5px"></u><u style="left:37px;top:69.5px;width:14px;height:3.5px"></u><u style="left:77px;top:69.5px;width:10px;height:3.5px"></u><u style="left:89px;top:69.5px;width:9px;height:3.5px"></u><u style="left:12px;top:77.7px;width:5px;height:3.5px"></u><u style="left:19px;top:77.7px;width:12px;height:3.5px"></u><u style="left:33px;top:77.7px;width:6px;height:3.5px"></u><u style="left:41px;top:77.7px;width:14px;height:3.5px"></u><u style="left:57px;top:77.7px;width:10px;height:3.5px"></u><u style="left:69px;top:77.7px;width:6px;height:3.5px"></u><u style="left:27px;top:85.9px;width:12px;height:3.5px"></u><u style="left:41px;top:85.9px;width:14px;height:3.5px"></u><u style="left:71px;top:85.9px;width:5px;height:3.5px"></u><u style="left:53px;top:90.7px;width:12px;height:3.5px"></u><u style="left:67px;top:90.7px;width:10px;height:3.5px"></u><u style="left:53px;top:106.7px;width:11px;height:3.5px"></u></div><div class="r g t" style="left:1638px;top:498px;width:82.4px;height:128px"><i></i><b>LD - S</b><u style="left:5px;top:54.2px;width:20px;height:3.5px"></u><u style="left:27px;top:54.2px;width:20px;height:3.5px"></u><u style="left:49px;top:54.2px;width:18px;height:3.5px"></u><u style="left:69px;top:54.2px;width:4px;height:3.5px"></u><u style="left:5px;top:65.7px;width:20px;height:3.5px"></u><u style="left:27px;top:65.7px;width:20px;height:3.5px"></u><u style="left:49px;top:65.7px;width:18px;height:3.5px"></u><u style="left:69px;top:65.7px;width:4px;height:3.5px"></u><u style="left:5px;top:72.1px;width:14px;height:3.5px"></u><u style="left:21px;top:72.1px;width:24px;height:3.5px"></u><u style="left:47px;top:72.1px;width:12px;height:3.5px"></u><u style="left:61px;top:72.1px;width:10px;height:3.5px"></u><u style="left:5px;top:84.4px;width:20px;height:3.5px"></u><u style="left:27px;top:84.4px;width:20px;height:3.5px"></u><u style="left:49px;top:84.4px;width:18px;height:3.5px"></u><u style="left:69px;top:84.4px;width:4px;height:3.5px"></u></div><div class="r g t" style="left:1744px;top:498px;width:106px;height:128px"><i></i><b>LD - Sta</b><u style="left:70px;top:44.1px;width:11px;height:3.5px"></u><u style="left:83px;top:44.1px;width:9px;height:3.5px"></u><u style="left:93px;top:44.1px;width:9px;height:3.5px"></u><u style="left:4.7px;top:50.5px;width:7px;height:3.5px"></u><u style="left:13px;top:50.5px;width:5px;height:3.5px"></u><u style="left:3px;top:57.2px;width:5px;height:3.5px"></u><u style="left:10px;top:57.2px;width:14px;height:3.5px"></u><u style="left:26px;top:57.2px;width:6px;height:3.5px"></u><u style="left:35px;top:57.2px;width:20px;height:3.5px"></u><u style="left:57px;top:57.2px;width:10px;height:3.5px"></u><u style="left:69px;top:57.2px;width:30px;height:3.5px"></u><u style="left:3px;top:61px;width:7px;height:3.5px"></u><u style="left:15px;top:61px;width:5px;height:3.5px"></u><u style="left:25px;top:61px;width:6px;height:3.5px"></u><u style="left:71px;top:61px;width:10px;height:3.5px"></u><u style="left:87px;top:61px;width:10px;height:3.5px"></u><u style="left:4.7px;top:69.5px;width:8px;height:3.5px"></u><u style="left:15px;top:69.5px;width:20px;height:3.5px"></u><u style="left:37px;top:69.5px;width:14px;height:3.5px"></u><u style="left:77px;top:69.5px;width:10px;height:3.5px"></u><u style="left:89px;top:69.5px;width:9px;height:3.5px"></u><u style="left:12px;top:77.7px;width:5px;height:3.5px"></u><u style="left:19px;top:77.7px;width:12px;height:3.5px"></u><u style="left:33px;top:77.7px;width:6px;height:3.5px"></u><u style="left:41px;top:77.7px;width:14px;height:3.5px"></u><u style="left:57px;top:77.7px;width:10px;height:3.5px"></u><u style="left:69px;top:77.7px;width:6px;height:3.5px"></u><u style="left:27px;top:85.9px;width:12px;height:3.5px"></u><u style="left:41px;top:85.9px;width:14px;height:3.5px"></u><u style="left:71px;top:85.9px;width:5px;height:3.5px"></u><u style="left:53px;top:90.7px;width:12px;height:3.5px"></u><u style="left:67px;top:90.7px;width:10px;height:3.5px"></u><u style="left:53px;top:106.7px;width:11px;height:3.5px"></u></div><div class="r g t" style="left:1848px;top:498px;width:100.1px;height:128px"><i></i><b>LD - St</b><u style="left:65.9px;top:44.1px;width:11px;height:3.5px"></u><u style="left:78.1px;top:44.1px;width:9px;height:3.5px"></u><u style="left:87.5px;top:44.1px;width:9px;height:3.5px"></u><u style="left:4.5px;top:50.5px;width:7px;height:3.5px"></u><u style="left:12.3px;top:50.5px;width:5px;height:3.5px"></u><u style="left:2.9px;top:57.2px;width:5px;height:3.5px"></u><u style="left:9.5px;top:57.2px;width:14px;height:3.5px"></u><u style="left:24.5px;top:57.2px;width:6px;height:3.5px"></u><u style="left:33px;top:57.2px;width:20px;height:3.5px"></u><u style="left:53.6px;top:57.2px;width:10px;height:3.5px"></u><u style="left:64.9px;top:57.2px;width:30px;height:3.5px"></u><u style="left:2.9px;top:61px;width:7px;height:3.5px"></u><u style="left:14.2px;top:61px;width:5px;height:3.5px"></u><u style="left:23.6px;top:61px;width:6px;height:3.5px"></u><u style="left:66.8px;top:61px;width:10px;height:3.5px"></u><u style="left:81.8px;top:61px;width:10px;height:3.5px"></u><u style="left:4.5px;top:69.5px;width:8px;height:3.5px"></u><u style="left:14.2px;top:69.5px;width:20px;height:3.5px"></u><u style="left:34.8px;top:69.5px;width:14px;height:3.5px"></u><u style="left:72.4px;top:69.5px;width:10px;height:3.5px"></u><u style="left:83.7px;top:69.5px;width:9px;height:3.5px"></u><u style="left:11.3px;top:77.7px;width:5px;height:3.5px"></u><u style="left:17.9px;top:77.7px;width:12px;height:3.5px"></u><u style="left:31.1px;top:77.7px;width:6px;height:3.5px"></u><u style="left:38.6px;top:77.7px;width:14px;height:3.5px"></u><u style="left:53.6px;top:77.7px;width:10px;height:3.5px"></u><u style="left:64.9px;top:77.7px;width:6px;height:3.5px"></u><u style="left:25.4px;top:85.9px;width:12px;height:3.5px"></u><u style="left:38.6px;top:85.9px;width:14px;height:3.5px"></u><u style="left:66.8px;top:85.9px;width:5px;height:3.5px"></u><u style="left:49.9px;top:90.7px;width:12px;height:3.5px"></u><u style="left:63px;top:90.7px;width:10px;height:3.5px"></u><u style="left:49.9px;top:106.7px;width:11px;height:3.5px"></u></div><div class="r g t" style="left:1952px;top:498px;width:108px;height:128px"><i></i><b>LD - Sta</b><u style="left:70px;top:44.1px;width:11px;height:3.5px"></u><u style="left:83px;top:44.1px;width:9px;height:3.5px"></u><u style="left:93px;top:44.1px;width:9px;height:3.5px"></u><u style="left:4.7px;top:50.5px;width:7px;height:3.5px"></u><u style="left:13px;top:50.5px;width:5px;height:3.5px"></u><u style="left:3px;top:57.2px;width:5px;height:3.5px"></u><u style="left:10px;top:57.2px;width:14px;height:3.5px"></u><u style="left:26px;top:57.2px;width:6px;height:3.5px"></u><u style="left:35px;top:57.2px;width:20px;height:3.5px"></u><u style="left:57px;top:57.2px;width:10px;height:3.5px"></u><u style="left:69px;top:57.2px;width:30px;height:3.5px"></u><u style="left:3px;top:61px;width:7px;height:3.5px"></u><u style="left:15px;top:61px;width:5px;height:3.5px"></u><u style="left:25px;top:61px;width:6px;height:3.5px"></u><u style="left:71px;top:61px;width:10px;height:3.5px"></u><u style="left:87px;top:61px;width:10px;height:3.5px"></u><u style="left:4.7px;top:69.5px;width:8px;height:3.5px"></u><u style="left:15px;top:69.5px;width:20px;height:3.5px"></u><u style="left:37px;top:69.5px;width:14px;height:3.5px"></u><u style="left:77px;top:69.5px;width:10px;height:3.5px"></u><u style="left:89px;top:69.5px;width:9px;height:3.5px"></u><u style="left:12px;top:77.7px;width:5px;height:3.5px"></u><u style="left:19px;top:77.7px;width:12px;height:3.5px"></u><u style="left:33px;top:77.7px;width:6px;height:3.5px"></u><u style="left:41px;top:77.7px;width:14px;height:3.5px"></u><u style="left:57px;top:77.7px;width:10px;height:3.5px"></u><u style="left:69px;top:77.7px;width:6px;height:3.5px"></u><u style="left:27px;top:85.9px;width:12px;height:3.5px"></u><u style="left:41px;top:85.9px;width:14px;height:3.5px"></u><u style="left:71px;top:85.9px;width:5px;height:3.5px"></u><u style="left:53px;top:90.7px;width:12px;height:3.5px"></u><u style="left:67px;top:90.7px;width:10px;height:3.5px"></u><u style="left:53px;top:106.7px;width:11px;height:3.5px"></u></div><div class="r g t" style="left:2058px;top:498px;width:99.3px;height:128px"><i></i><b>LD - St</b><u style="left:65.9px;top:44.1px;width:11px;height:3.5px"></u><u style="left:78.1px;top:44.1px;width:9px;height:3.5px"></u><u style="left:87.5px;top:44.1px;width:8.8px;height:3.5px"></u><u style="left:4.5px;top:50.5px;width:7px;height:3.5px"></u><u style="left:12.3px;top:50.5px;width:5px;height:3.5px"></u><u style="left:2.9px;top:57.2px;width:5px;height:3.5px"></u><u style="left:9.5px;top:57.2px;width:14px;height:3.5px"></u><u style="left:24.5px;top:57.2px;width:6px;height:3.5px"></u><u style="left:33px;top:57.2px;width:20px;height:3.5px"></u><u style="left:53.6px;top:57.2px;width:10px;height:3.5px"></u><u style="left:64.9px;top:57.2px;width:30px;height:3.5px"></u><u style="left:2.9px;top:61px;width:7px;height:3.5px"></u><u style="left:14.2px;top:61px;width:5px;height:3.5px"></u><u style="left:23.6px;top:61px;width:6px;height:3.5px"></u><u style="left:66.8px;top:61px;width:10px;height:3.5px"></u><u style="left:81.8px;top:61px;width:10px;height:3.5px"></u><u style="left:4.5px;top:69.5px;width:8px;height:3.5px"></u><u style="left:14.2px;top:69.5px;width:20px;height:3.5px"></u><u style="left:34.8px;top:69.5px;width:14px;height:3.5px"></u><u style="left:72.4px;top:69.5px;width:10px;height:3.5px"></u><u style="left:83.7px;top:69.5px;width:9px;height:3.5px"></u><u style="left:11.3px;top:77.7px;width:5px;height:3.5px"></u><u style="left:17.9px;top:77.7px;width:12px;height:3.5px"></u><u style="left:31.1px;top:77.7px;width:6px;height:3.5px"></u><u style="left:38.6px;top:77.7px;width:14px;height:3.5px"></u><u style="left:53.6px;top:77.7px;width:10px;height:3.5px"></u><u style="left:64.9px;top:77.7px;width:6px;height:3.5px"></u><u style="left:25.4px;top:85.9px;width:12px;height:3.5px"></u><u style="left:38.6px;top:85.9px;width:14px;height:3.5px"></u><u style="left:66.8px;top:85.9px;width:5px;height:3.5px"></u><u style="left:49.9px;top:90.7px;width:12px;height:3.5px"></u><u style="left:63px;top:90.7px;width:10px;height:3.5px"></u><u style="left:49.9px;top:106.7px;width:11px;height:3.5px"></u></div><div class="r g t" style="left:2162px;top:498px;width:106px;height:128px"><i></i><b>LD - Sta</b><u style="left:70px;top:44.1px;width:11px;height:3.5px"></u><u style="left:83px;top:44.1px;width:9px;height:3.5px"></u><u style="left:93px;top:44.1px;width:9px;height:3.5px"></u><u style="left:4.7px;top:50.5px;width:7px;height:3.5px"></u><u style="left:13px;top:50.5px;width:5px;height:3.5px"></u><u style="left:3px;top:57.2px;width:5px;height:3.5px"></u><u style="left:10px;top:57.2px;width:14px;height:3.5px"></u><u style="left:26px;top:57.2px;width:6px;height:3.5px"></u><u style="left:35px;top:57.2px;width:20px;height:3.5px"></u><u style="left:57px;top:57.2px;width:10px;height:3.5px"></u><u style="left:69px;top:57.2px;width:30px;height:3.5px"></u><u style="left:3px;top:61px;width:7px;height:3.5px"></u><u style="left:15px;top:61px;width:5px;height:3.5px"></u><u style="left:25px;top:61px;width:6px;height:3.5px"></u><u style="left:71px;top:61px;width:10px;height:3.5px"></u><u style="left:87px;top:61px;width:10px;height:3.5px"></u><u style="left:4.7px;top:69.5px;width:8px;height:3.5px"></u><u style="left:15px;top:69.5px;width:20px;height:3.5px"></u><u style="left:37px;top:69.5px;width:14px;height:3.5px"></u><u style="left:77px;top:69.5px;width:10px;height:3.5px"></u><u style="left:89px;top:69.5px;width:9px;height:3.5px"></u><u style="left:12px;top:77.7px;width:5px;height:3.5px"></u><u style="left:19px;top:77.7px;width:12px;height:3.5px"></u><u style="left:33px;top:77.7px;width:6px;height:3.5px"></u><u style="left:41px;top:77.7px;width:14px;height:3.5px"></u><u style="left:57px;top:77.7px;width:10px;height:3.5px"></u><u style="left:69px;top:77.7px;width:6px;height:3.5px"></u><u style="left:27px;top:85.9px;width:12px;height:3.5px"></u><u style="left:41px;top:85.9px;width:14px;height:3.5px"></u><u style="left:71px;top:85.9px;width:5px;height:3.5px"></u><u style="left:53px;top:90.7px;width:12px;height:3.5px"></u><u style="left:67px;top:90.7px;width:10px;height:3.5px"></u><u style="left:53px;top:106.7px;width:11px;height:3.5px"></u></div><div class="r g t" style="left:2266px;top:498px;width:99.6px;height:128px"><i></i><b>LD - St</b><u style="left:65.9px;top:44.1px;width:11px;height:3.5px"></u><u style="left:78.1px;top:44.1px;width:9px;height:3.5px"></u><u style="left:87.5px;top:44.1px;width:9px;height:3.5px"></u><u style="left:4.5px;top:50.5px;width:7px;height:3.5px"></u><u style="left:12.3px;top:50.5px;width:5px;height:3.5px"></u><u style="left:2.9px;top:57.2px;width:5px;height:3.5px"></u><u style="left:9.5px;top:57.2px;width:14px;height:3.5px"></u><u style="left:24.5px;top:57.2px;width:6px;height:3.5px"></u><u style="left:33px;top:57.2px;width:20px;height:3.5px"></u><u style="left:53.6px;top:57.2px;width:10px;height:3.5px"></u><u style="left:64.9px;top:57.2px;width:30px;height:3.5px"></u><u style="left:2.9px;top:61px;width:7px;height:3.5px"></u><u style="left:14.2px;top:61px;width:5px;height:3.5px"></u><u style="left:23.6px;top:61px;width:6px;height:3.5px"></u><u style="left:66.8px;top:61px;width:10px;height:3.5px"></u><u style="left:81.8px;top:61px;width:10px;height:3.5px"></u><u style="left:4.5px;top:69.5px;width:8px;height:3.5px"></u><u style="left:14.2px;top:69.5px;width:20px;height:3.5px"></u><u style="left:34.8px;top:69.5px;width:14px;height:3.5px"></u><u style="left:72.4px;top:69.5px;width:10px;height:3.5px"></u><u style="left:83.7px;top:69.5px;width:9px;height:3.5px"></u><u style="left:11.3px;top:77.7px;width:5px;height:3.5px"></u><u style="left:17.9px;top:77.7px;width:12px;height:3.5px"></u><u style="left:31.1px;top:77.7px;width:6px;height:3.5px"></u><u style="left:38.6px;top:77.7px;width:14px;height:3.5px"></u><u style="left:53.6px;top:77.7px;width:10px;height:3.5px"></u><u style="left:64.9px;top:77.7px;width:6px;height:3.5px"></u><u style="left:25.4px;top:85.9px;width:12px;height:3.5px"></u><u style="left:38.6px;top:85.9px;width:14px;height:3.5px"></u><u style="left:66.8px;top:85.9px;width:5px;height:3.5px"></u><u style="left:49.9px;top:90.7px;width:12px;height:3.5px"></u><u style="left:63px;top:90.7px;width:10px;height:3.5px"></u><u style="left:49.9px;top:106.7px;width:11px;height:3.5px"></u></div><div class="r g t" style="left:254px;top:628px;width:210px;height:96px"><i></i><b>Inst 1</b><u style="left:4px;top:55px;width:6px"></u><u style="left:14px;top:57px;width:6px"></u><u style="left:24px;top:65px;width:6px"></u><u style="left:30px;top:72px;width:6px"></u><u style="left:40px;top:65px;width:6px"></u><u style="left:56px;top:82px;width:6px"></u><u style="left:66px;top:72px;width:6px"></u><u style="left:76px;top:65px;width:6px"></u><u style="left:82px;top:72px;width:6px"></u><u style="left:92px;top:65px;width:6px"></u><u style="left:109px;top:65px;width:6px"></u><u style="left:122.6px;top:65px;width:6px"></u><u style="left:135px;top:65px;width:6px"></u><u style="left:150px;top:65px;width:11px"></u><u style="left:168.5px;top:65px;width:13px"></u></div><div class="r g t" style="left:672px;top:628px;width:106px;height:96px"><i></i><b>Inst 1</b><u style="left:4px;top:55px;width:6px"></u><u style="left:14px;top:57px;width:6px"></u><u style="left:24px;top:65px;width:6px"></u><u style="left:30px;top:72px;width:6px"></u><u style="left:40px;top:65px;width:6px"></u><u style="left:56px;top:82px;width:6px"></u><u style="left:66px;top:72px;width:6px"></u><u style="left:76px;top:65px;width:6px"></u><u style="left:82px;top:72px;width:6px"></u><u style="left:92px;top:65px;width:6px"></u></div><div class="r g t" style="left:776px;top:628px;width:100.3px;height:96px"><i></i><b>Inst 1</b><u style="left:2.5px;top:43px;width:6px"></u><u style="left:12.5px;top:50px;width:6px"></u><u style="left:22.5px;top:56px;width:6px"></u><u style="left:28.8px;top:58px;width:6px"></u><u style="left:38.2px;top:56px;width:6px"></u><u style="left:54.5px;top:72px;width:6px"></u><u style="left:64.5px;top:58px;width:6px"></u><u style="left:74.5px;top:56px;width:6px"></u><u style="left:80.5px;top:72px;width:6px"></u><u style="left:90.5px;top:65px;width:6px"></u></div><div class="r g t" style="left:880px;top:628px;width:108px;height:96px"><i></i><b>Inst 1</b><u style="left:4px;top:55px;width:6px"></u><u style="left:14px;top:57px;width:6px"></u><u style="left:24px;top:65px;width:6px"></u><u style="left:30px;top:72px;width:6px"></u><u style="left:40px;top:65px;width:6px"></u><u style="left:56px;top:82px;width:6px"></u><u style="left:66px;top:72px;width:6px"></u><u style="left:76px;top:65px;width:6px"></u><u style="left:82px;top:72px;width:6px"></u><u style="left:92px;top:65px;width:6px"></u></div><div class="r g t" style="left:986px;top:628px;width:99.4px;height:96px"><i></i><b>Inst 1</b><u style="left:2.5px;top:43px;width:6px"></u><u style="left:12.5px;top:50px;width:6px"></u><u style="left:22.5px;top:56px;width:6px"></u><u style="left:28.8px;top:58px;width:6px"></u><u style="left:38.2px;top:56px;width:6px"></u><u style="left:54.5px;top:72px;width:6px"></u><u style="left:64.5px;top:58px;width:6px"></u><u style="left:74.5px;top:56px;width:6px"></u><u style="left:80.5px;top:72px;width:6px"></u><u style="left:90.5px;top:65px;width:5.9px"></u></div><div class="r g t" style="left:1534px;top:628px;width:212px;height:96px"><i></i><b>Inst 1</b><u style="left:4px;top:55px;width:6px"></u><u style="left:14px;top:57px;width:6px"></u><u style="left:24px;top:65px;width:6px"></u><u style="left:30px;top:72px;width:6px"></u><u style="left:40px;top:65px;width:6px"></u><u style="left:56px;top:82px;width:6px"></u><u style="left:66px;top:72px;width:6px"></u><u style="left:76px;top:65px;width:6px"></u><u style="left:82px;top:72px;width:6px"></u><u style="left:92px;top:65px;width:6px"></u><u style="left:111.8px;top:65px;width:6px"></u><u style="left:123px;top:65px;width:6px"></u><u style="left:136px;top:65px;width:6px"></u><u style="left:147px;top:65px;width:6px"></u><u style="left:156.5px;top:65px;width:24px"></u><u style="left:182.6px;top:65px;width:6px"></u></div><div class="r g t" style="left:1744px;top:628px;width:106px;height:96px"><i></i><b>Inst 1</b><u style="left:4px;top:55px;width:6px"></u><u style="left:14px;top:57px;width:6px"></u><u style="left:24px;top:65px;width:6px"></u><u style="left:30px;top:72px;width:6px"></u><u style="left:40px;top:65px;width:6px"></u><u style="left:56px;top:82px;width:6px"></u><u style="left:66px;top:72px;width:6px"></u><u style="left:76px;top:65px;width:6px"></u><u style="left:82px;top:72px;width:6px"></u><u style="left:92px;top:65px;width:6px"></u></div><div class="r g t" style="left:1848px;top:628px;width:100.1px;height:96px"><i></i><b>Inst 1</b><u style="left:2.5px;top:43px;width:6px"></u><u style="left:12.5px;top:50px;width:6px"></u><u style="left:22.5px;top:56px;width:6px"></u><u style="left:28.8px;top:58px;width:6px"></u><u style="left:38.2px;top:56px;width:6px"></u><u style="left:54.5px;top:72px;width:6px"></u><u style="left:64.5px;top:58px;width:6px"></u><u style="left:74.5px;top:56px;width:6px"></u><u style="left:80.5px;top:72px;width:6px"></u><u style="left:90.5px;top:65px;width:6px"></u></div><div class="r g t" style="left:1952px;top:628px;width:108px;height:96px"><i></i><b>Inst 1</b><u style="left:4px;top:55px;width:6px"></u><u style="left:14px;top:57px;width:6px"></u><u style="left:24px;top:65px;width:6px"></u><u style="left:30px;top:72px;width:6px"></u><u style="left:40px;top:65px;width:6px"></u><u style="left:56px;top:82px;width:6px"></u><u style="left:66px;top:72px;width:6px"></u><u style="left:76px;top:65px;width:6px"></u><u style="left:82px;top:72px;width:6px"></u><u style="left:92px;top:65px;width:6px"></u></div><div class="r g t" style="left:2058px;top:628px;width:99.3px;height:96px"><i></i><b>Inst 1</b><u style="left:2.5px;top:43px;width:6px"></u><u style="left:12.5px;top:50px;width:6px"></u><u style="left:22.5px;top:56px;width:6px"></u><u style="left:28.8px;top:58px;width:6px"></u><u style="left:38.2px;top:56px;width:6px"></u><u style="left:54.5px;top:72px;width:6px"></u><u style="left:64.5px;top:58px;width:6px"></u><u style="left:74.5px;top:56px;width:6px"></u><u style="left:80.5px;top:72px;width:6px"></u><u style="left:90.5px;top:65px;width:5.8px"></u></div><div class="r g t" style="left:2162px;top:628px;width:106px;height:96px"><i></i><b>Inst 1</b><u style="left:4px;top:55px;width:6px"></u><u style="left:14px;top:57px;width:6px"></u><u style="left:24px;top:65px;width:6px"></u><u style="left:30px;top:72px;width:6px"></u><u style="left:40px;top:65px;width:6px"></u><u style="left:56px;top:82px;width:6px"></u><u style="left:66px;top:72px;width:6px"></u><u style="left:76px;top:65px;width:6px"></u><u style="left:82px;top:72px;width:6px"></u><u style="left:92px;top:65px;width:6px"></u></div><div class="r g t" style="left:2266px;top:628px;width:99.6px;height:96px"><i></i><b>Inst 1</b><u style="left:2.5px;top:43px;width:6px"></u><u style="left:12.5px;top:50px;width:6px"></u><u style="left:22.5px;top:56px;width:6px"></u><u style="left:28.8px;top:58px;width:6px"></u><u style="left:38.2px;top:56px;width:6px"></u><u style="left:54.5px;top:72px;width:6px"></u><u style="left:64.5px;top:58px;width:6px"></u><u style="left:74.5px;top:56px;width:6px"></u><u style="left:80.5px;top:72px;width:6px"></u><u style="left:90.5px;top:65px;width:6px"></u></div><div class="r g c" style="left:612.1px;top:726px;width:19.2px;height:28px"><i style="border-radius:1.500px"></i></div><div class="r g" style="left:1116px;top:754px;width:106px;height:28px"><i></i><b>020-PIA</b></div><div class="r g" style="left:1220px;top:754px;width:108px;height:28px"><i></i><b>020-PIA</b></div><div class="r g" style="left:1534px;top:782px;width:186.4px;height:28px"><i></i><b>EXS Strings 1</b></div><div class="r g t" style="left:254px;top:810px;width:106px;height:78px"><i></i><b>Inst 1 (-1</b><u style="left:2px;top:54.2px;width:9px;height:3px"></u><u style="left:11px;top:57.9px;width:9.5px;height:3px"></u><u style="left:20.5px;top:62.4px;width:25.5px;height:3px"></u><u style="left:47px;top:50.1px;width:14.5px;height:3px"></u><u style="left:63px;top:57.9px;width:10px;height:3px"></u><u style="left:73px;top:54.2px;width:29.5px;height:3px"></u></div><div class="r g t" style="left:358px;top:810px;width:80px;height:78px"><i></i><b>Inst 1</b><u style="left:2px;top:46px;width:75px"></u></div><div class="r g t" style="left:1116px;top:810px;width:106px;height:78px"><i></i><b>Inst 1 (-1</b><u style="left:1px;top:46.3px;width:17px;height:3px"></u><u style="left:23.5px;top:59.7px;width:20.5px;height:3px"></u><u style="left:51.4px;top:64.2px;width:13px;height:3px"></u><u style="left:68px;top:64.2px;width:6px;height:3px"></u><u style="left:75.6px;top:54.2px;width:15px;height:3px"></u></div><div class="r g t" style="left:1220px;top:810px;width:108px;height:78px"><i></i><b>Inst 1 (-1</b><u style="left:1px;top:46.3px;width:12px;height:3px"></u><u style="left:18px;top:46.3px;width:6px;height:3px"></u><u style="left:25px;top:59.7px;width:12px;height:3px"></u><u style="left:45px;top:59.7px;width:6px;height:3px"></u><u style="left:51px;top:64.2px;width:12px;height:3px"></u><u style="left:70px;top:64.2px;width:6px;height:3px"></u><u style="left:77px;top:54.2px;width:27px;height:3px"></u></div><div class="r g t" style="left:1326px;top:810px;width:106px;height:78px"><i></i><b>Inst 1 (-1</b><u style="left:2px;top:54.2px;width:9px;height:3px"></u><u style="left:11px;top:57.9px;width:9.5px;height:3px"></u><u style="left:20.5px;top:62.4px;width:25.5px;height:3px"></u><u style="left:47px;top:50.1px;width:14.5px;height:3px"></u><u style="left:63px;top:57.9px;width:10px;height:3px"></u><u style="left:73px;top:54.2px;width:29.5px;height:3px"></u></div><div class="r g t" style="left:1430px;top:810px;width:106px;height:78px"><i></i><b>Inst 1 (-1</b><u style="left:1px;top:43.5px;width:9px;height:3px"></u><u style="left:10px;top:48.5px;width:10px;height:3px"></u><u style="left:20px;top:54.2px;width:26px;height:3px"></u><u style="left:46px;top:57.9px;width:18px;height:3px"></u><u style="left:64px;top:48.5px;width:8px;height:3px"></u><u style="left:73px;top:56px;width:30px;height:3px"></u></div><div class="r g t" style="left:1534px;top:810px;width:106px;height:78px"><i></i><b>Inst 1 (-1</b><u style="left:2px;top:54.2px;width:9px;height:3px"></u><u style="left:11px;top:57.9px;width:9.5px;height:3px"></u><u style="left:20.5px;top:62.4px;width:25.5px;height:3px"></u><u style="left:47px;top:50.1px;width:14.5px;height:3px"></u><u style="left:63px;top:57.9px;width:10px;height:3px"></u><u style="left:73px;top:54.2px;width:29.5px;height:3px"></u></div><div class="r g t" style="left:1638px;top:810px;width:82.4px;height:78px"><i></i><b>Inst 1</b><u style="left:2px;top:46px;width:77.4px"></u></div><div class="r g t" style="left:44px;top:890px;width:106px;height:78px"><i></i><b>Inst 1</b><u style="left:4.4px;top:50.1px;width:6.3px;height:3.6px"></u><u style="left:4.4px;top:57.9px;width:6.3px;height:3.6px"></u><u style="left:14.5px;top:52.4px;width:6.3px;height:3.6px"></u><u style="left:14.5px;top:60.2px;width:6.3px;height:3.6px"></u><u style="left:24.7px;top:54px;width:11.8px;height:3.6px"></u><u style="left:24.7px;top:61.8px;width:11.8px;height:3.6px"></u><u style="left:40.4px;top:54px;width:6.3px;height:3.6px"></u><u style="left:40.4px;top:61.8px;width:6.3px;height:3.6px"></u><u style="left:50.6px;top:46.2px;width:11.8px;height:3.6px"></u><u style="left:50.6px;top:54px;width:11.8px;height:3.6px"></u><u style="left:66.3px;top:52.4px;width:6.3px;height:3.6px"></u><u style="left:66.3px;top:60.2px;width:6.3px;height:3.6px"></u><u style="left:76.5px;top:50.1px;width:11.8px;height:3.6px"></u><u style="left:76.5px;top:57.9px;width:11.8px;height:3.6px"></u><u style="left:92.5px;top:50.1px;width:6.3px;height:3.6px"></u><u style="left:92.5px;top:57.9px;width:6.3px;height:3.6px"></u></div><div class="r g t" style="left:148px;top:890px;width:108px;height:78px"><i></i><b>Inst 1</b><u style="left:4.4px;top:44.7px;width:6.3px;height:3.6px"></u><u style="left:4.4px;top:52.5px;width:6.3px;height:3.6px"></u><u style="left:14.5px;top:46.6px;width:6.3px;height:3.6px"></u><u style="left:14.5px;top:54.4px;width:6.3px;height:3.6px"></u><u style="left:24.7px;top:48.5px;width:11.8px;height:3.6px"></u><u style="left:24.7px;top:56.3px;width:11.8px;height:3.6px"></u><u style="left:40.4px;top:48.5px;width:6.3px;height:3.6px"></u><u style="left:40.4px;top:56.3px;width:6.3px;height:3.6px"></u><u style="left:50.6px;top:50.4px;width:6.3px;height:3.6px"></u><u style="left:50.6px;top:58.2px;width:6.3px;height:3.6px"></u><u style="left:60.8px;top:50.4px;width:6.3px;height:3.6px"></u><u style="left:60.8px;top:58.2px;width:6.3px;height:3.6px"></u><u style="left:66.3px;top:46.6px;width:6.3px;height:3.6px"></u><u style="left:66.3px;top:54.4px;width:6.3px;height:3.6px"></u><u style="left:76.5px;top:50.4px;width:6.3px;height:3.6px"></u><u style="left:76.5px;top:58.2px;width:6.3px;height:3.6px"></u><u style="left:86.7px;top:50.4px;width:11.8px;height:3.6px"></u><u style="left:86.7px;top:58.2px;width:11.8px;height:3.6px"></u></div><div class="r g t" style="left:254px;top:890px;width:106px;height:78px"><i></i><b>Inst 1</b><u style="left:2.8px;top:50.1px;width:6px;height:3.6px"></u><u style="left:2.8px;top:57.9px;width:6px;height:3.6px"></u><u style="left:13px;top:52.4px;width:6px;height:3.6px"></u><u style="left:13px;top:60.2px;width:6px;height:3.6px"></u><u style="left:22.9px;top:54.5px;width:6px;height:3.6px"></u><u style="left:22.9px;top:62.3px;width:6px;height:3.6px"></u><u style="left:32.6px;top:54.5px;width:6px;height:3.6px"></u><u style="left:32.6px;top:62.3px;width:6px;height:3.6px"></u><u style="left:45.1px;top:54.5px;width:6px;height:3.6px"></u><u style="left:45.1px;top:62.3px;width:6px;height:3.6px"></u><u style="left:49px;top:46.6px;width:6px;height:3.6px"></u><u style="left:49px;top:54.4px;width:6px;height:3.6px"></u><u style="left:54.5px;top:51.7px;width:6px;height:3.6px"></u><u style="left:54.5px;top:59.5px;width:6px;height:3.6px"></u><u style="left:58.5px;top:46.6px;width:6px;height:3.6px"></u><u style="left:58.5px;top:54.4px;width:6px;height:3.6px"></u><u style="left:64.7px;top:52.4px;width:6px;height:3.6px"></u><u style="left:64.7px;top:60.2px;width:6px;height:3.6px"></u><u style="left:74.9px;top:50.4px;width:6px;height:3.6px"></u><u style="left:74.9px;top:58.2px;width:6px;height:3.6px"></u><u style="left:84.3px;top:50.4px;width:6px;height:3.6px"></u><u style="left:84.3px;top:58.2px;width:6px;height:3.6px"></u><u style="left:96.9px;top:50.4px;width:6px;height:3.6px"></u><u style="left:96.9px;top:58.2px;width:6px;height:3.6px"></u></div><div class="r g t" style="left:358px;top:890px;width:80px;height:78px"><i></i><b>Inst 1</b><u style="left:4.4px;top:44.6px;width:6px;height:3.6px"></u><u style="left:4.4px;top:54.5px;width:6px;height:3.6px"></u><u style="left:12.2px;top:44.6px;width:6px;height:3.6px"></u><u style="left:12.2px;top:54.5px;width:6px;height:3.6px"></u><u style="left:22.4px;top:44.6px;width:6px;height:3.6px"></u><u style="left:22.4px;top:54.5px;width:6px;height:3.6px"></u><u style="left:30.2px;top:44.6px;width:6px;height:3.6px"></u><u style="left:30.2px;top:54.5px;width:6px;height:3.6px"></u><u style="left:40.4px;top:44.6px;width:6px;height:3.6px"></u><u style="left:40.4px;top:54.5px;width:6px;height:3.6px"></u><u style="left:48.3px;top:44.6px;width:6px;height:3.6px"></u><u style="left:48.3px;top:54.5px;width:6px;height:3.6px"></u><u style="left:56.1px;top:44.6px;width:6px;height:3.6px"></u><u style="left:56.1px;top:54.5px;width:6px;height:3.6px"></u><u style="left:66.3px;top:44.6px;width:6px;height:3.6px"></u><u style="left:66.3px;top:54.5px;width:6px;height:3.6px"></u></div><div class="r g t" style="left:1326px;top:890px;width:106px;height:78px"><i></i><b>Inst 1</b><u style="left:2.8px;top:50.1px;width:6px;height:3.6px"></u><u style="left:2.8px;top:57.9px;width:6px;height:3.6px"></u><u style="left:13px;top:52.4px;width:6px;height:3.6px"></u><u style="left:13px;top:60.2px;width:6px;height:3.6px"></u><u style="left:22.9px;top:54.5px;width:6px;height:3.6px"></u><u style="left:22.9px;top:62.3px;width:6px;height:3.6px"></u><u style="left:32.6px;top:54.5px;width:6px;height:3.6px"></u><u style="left:32.6px;top:62.3px;width:6px;height:3.6px"></u><u style="left:45.1px;top:54.5px;width:6px;height:3.6px"></u><u style="left:45.1px;top:62.3px;width:6px;height:3.6px"></u><u style="left:49px;top:46.6px;width:6px;height:3.6px"></u><u style="left:49px;top:54.4px;width:6px;height:3.6px"></u><u style="left:54.5px;top:51.7px;width:6px;height:3.6px"></u><u style="left:54.5px;top:59.5px;width:6px;height:3.6px"></u><u style="left:58.5px;top:46.6px;width:6px;height:3.6px"></u><u style="left:58.5px;top:54.4px;width:6px;height:3.6px"></u><u style="left:64.7px;top:52.4px;width:6px;height:3.6px"></u><u style="left:64.7px;top:60.2px;width:6px;height:3.6px"></u><u style="left:74.9px;top:50.4px;width:6px;height:3.6px"></u><u style="left:74.9px;top:58.2px;width:6px;height:3.6px"></u><u style="left:84.3px;top:50.4px;width:6px;height:3.6px"></u><u style="left:84.3px;top:58.2px;width:6px;height:3.6px"></u><u style="left:96.9px;top:50.4px;width:6px;height:3.6px"></u><u style="left:96.9px;top:58.2px;width:6px;height:3.6px"></u></div><div class="r g t" style="left:1430px;top:890px;width:106px;height:78px"><i></i><b>Inst 1</b><u style="left:4.4px;top:44.7px;width:6.3px;height:3.6px"></u><u style="left:4.4px;top:52.5px;width:6.3px;height:3.6px"></u><u style="left:14.5px;top:46.6px;width:6.3px;height:3.6px"></u><u style="left:14.5px;top:54.4px;width:6.3px;height:3.6px"></u><u style="left:24.7px;top:48.5px;width:11.8px;height:3.6px"></u><u style="left:24.7px;top:56.3px;width:11.8px;height:3.6px"></u><u style="left:40.4px;top:48.5px;width:6.3px;height:3.6px"></u><u style="left:40.4px;top:56.3px;width:6.3px;height:3.6px"></u><u style="left:50.6px;top:50.4px;width:6.3px;height:3.6px"></u><u style="left:50.6px;top:58.2px;width:6.3px;height:3.6px"></u><u style="left:60.8px;top:50.4px;width:6.3px;height:3.6px"></u><u style="left:60.8px;top:58.2px;width:6.3px;height:3.6px"></u><u style="left:66.3px;top:46.6px;width:6.3px;height:3.6px"></u><u style="left:66.3px;top:54.4px;width:6.3px;height:3.6px"></u><u style="left:76.5px;top:50.4px;width:6.3px;height:3.6px"></u><u style="left:76.5px;top:58.2px;width:6.3px;height:3.6px"></u><u style="left:86.7px;top:50.4px;width:11.8px;height:3.6px"></u><u style="left:86.7px;top:58.2px;width:11.8px;height:3.6px"></u></div><div class="r g t" style="left:1638px;top:890px;width:82.4px;height:78px"><i></i><b>Inst 1</b><u style="left:4.4px;top:44.6px;width:6px;height:3.6px"></u><u style="left:4.4px;top:54.5px;width:6px;height:3.6px"></u><u style="left:12.2px;top:44.6px;width:6px;height:3.6px"></u><u style="left:12.2px;top:54.5px;width:6px;height:3.6px"></u><u style="left:22.4px;top:44.6px;width:6px;height:3.6px"></u><u style="left:22.4px;top:54.5px;width:6px;height:3.6px"></u><u style="left:30.2px;top:44.6px;width:6px;height:3.6px"></u><u style="left:30.2px;top:54.5px;width:6px;height:3.6px"></u><u style="left:40.4px;top:44.6px;width:6px;height:3.6px"></u><u style="left:40.4px;top:54.5px;width:6px;height:3.6px"></u><u style="left:48.3px;top:44.6px;width:6px;height:3.6px"></u><u style="left:48.3px;top:54.5px;width:6px;height:3.6px"></u><u style="left:56.1px;top:44.6px;width:6px;height:3.6px"></u><u style="left:56.1px;top:54.5px;width:6px;height:3.6px"></u><u style="left:66.3px;top:44.6px;width:6px;height:3.6px"></u><u style="left:66.3px;top:54.5px;width:6px;height:3.6px"></u></div><div class="r g" style="left:254px;top:970px;width:106px;height:28px"><i></i><b>Inst 1</b></div><div class="r g" style="left:358px;top:970px;width:80px;height:28px"><i></i><b>Inst 1</b></div><div class="r g" style="left:1116px;top:970px;width:106px;height:28px"><i></i><b>Inst 1</b></div><div class="r g" style="left:1220px;top:970px;width:108px;height:28px"><i></i><b>Inst 1</b></div><div class="r g" style="left:1638px;top:970px;width:82.4px;height:28px"><i></i><b>Inst 1</b></div><div class="r c" style="left:137.7px;top:998px;width:10.3px;height:28px"><i style="border-radius:1.500px"></i></div><div class="r c" style="left:146.3px;top:998px;width:18.4px;height:28px"><i style="border-radius:1.500px"></i></div><div class="r c" style="left:217.7px;top:998px;width:7.5px;height:28px"><i style="border-radius:1.500px"></i></div><div class="r c" style="left:223.4px;top:998px;width:19.5px;height:28px"><i style="border-radius:1.500px"></i></div><div class="r c" style="left:1420.7px;top:998px;width:8.2px;height:28px"><i style="border-radius:1.500px"></i></div><div class="r c" style="left:1427.3px;top:998px;width:17.4px;height:28px"><i style="border-radius:1.500px"></i></div><div class="r c" style="left:1497.8px;top:998px;width:8.2px;height:28px"><i style="border-radius:1.500px"></i></div><div class="r c" style="left:1504.4px;top:998px;width:17.9px;height:28px"><i style="border-radius:1.500px"></i></div><div class="r c" style="left:250.3px;top:1026px;width:17.9px;height:28px"><i style="border-radius:1.500px"></i></div><div class="r c" style="left:1532.3px;top:1026px;width:18.4px;height:28px"><i style="border-radius:1.500px"></i></div><div class="r" style="left:254px;top:1054px;width:184px;height:28px"><i></i><b>VEDM3 Downlif</b></div><div class="r" style="left:1090.8px;top:1054px;width:27.2px;height:28px"><i></i></div><div class="r" style="left:1116px;top:1054px;width:186.2px;height:28px"><i></i><b>VEDM3 Downlift</b></div><div class="r" style="left:1534px;top:1054px;width:80px;height:28px"><i></i><b>VEDM</b></div><div class="r" style="left:1612px;top:1054px;width:28px;height:28px"><i></i></div><div class="r" style="left:254px;top:1082px;width:130.6px;height:28px"><i></i><b>VEDM Imp</b></div><div class="r" style="left:1090.8px;top:1082px;width:27.2px;height:28px"><i></i></div><div class="r" style="left:1116px;top:1082px;width:130px;height:28px"><i></i><b>VEDM Imp</b></div><div class="r" style="left:1534px;top:1082px;width:80px;height:28px"><i></i><b>VEDM</b></div><div class="r" style="left:1612px;top:1082px;width:28px;height:28px"><i></i></div><div class="r" style="left:44px;top:1110px;width:208.6px;height:28px"><i></i><b>VEDM3 Impact 01</b></div><div class="r" style="left:1326.6px;top:1110px;width:207.4px;height:28px"><i></i><b>VEDM3 Impact 01</b></div><div class="r" style="left:1090.8px;top:1138px;width:27.2px;height:28px"><i></i></div><div class="r" style="left:1116px;top:1138px;width:103.8px;height:28px"><i></i><b>VEDM3 I</b></div><div class="r" style="left:1534px;top:1138px;width:80px;height:28px"><i></i><b>VEDM</b></div><div class="r" style="left:1612px;top:1138px;width:28px;height:28px"><i></i></div><div class="r" style="left:44px;top:1166px;width:212px;height:28px"><i></i><b>KSHMR_Sweep_D</b></div><div class="r" style="left:354.4px;top:1166px;width:83.6px;height:28px"><i></i><b>KSHM</b></div><div class="r" style="left:1326.6px;top:1166px;width:207.4px;height:28px"><i></i><b>KSHMR_Sweep_D</b></div><div class="r" style="left:1534px;top:1166px;width:182.5px;height:28px"><i></i><b>KSHMR_Sweep</b></div><div class="r" style="left:462px;top:1194px;width:108.5px;height:28px"><i></i><b>VEDM I</b></div><div class="r" style="left:672px;top:1194px;width:129.5px;height:28px"><i></i><b>VEDM Imp</b></div><div class="r" style="left:880px;top:1194px;width:132.3px;height:28px"><i></i><b>VEDM Imp</b></div><div class="r" style="left:1744px;top:1194px;width:106.6px;height:28px"><i></i><b>VEDM I</b></div><div class="r" style="left:1952px;top:1194px;width:132.3px;height:28px"><i></i><b>VEDM Imp</b></div><div class="r" style="left:2162px;top:1194px;width:129.6px;height:28px"><i></i><b>VEDM Imp</b></div><div class="r" style="left:70px;top:1222px;width:186px;height:28px"><i></i><b>KSHMR_Sweep</b></div><div class="r" style="left:482.5px;top:1222px;width:185.7px;height:28px"><i></i><b>KSHMR_Sweep</b></div><div class="r" style="left:692.1px;top:1222px;width:184.2px;height:28px"><i></i><b>KSHMR_Sweep</b></div><div class="r" style="left:900.5px;top:1222px;width:186px;height:28px"><i></i><b>KSHMR_Sweep</b></div><div class="r" style="left:1116px;top:1222px;width:186.2px;height:28px"><i></i><b>KSHMR_Sweep</b></div><div class="r" style="left:1352.7px;top:1222px;width:183.3px;height:28px"><i></i><b>KSHMR_Sweep</b></div><div class="r" style="left:1764.5px;top:1222px;width:183.9px;height:28px"><i></i><b>KSHMR_Sweep</b></div><div class="r" style="left:1972.6px;top:1222px;width:185px;height:28px"><i></i><b>KSHMR_Sweep</b></div><div class="r" style="left:2182.8px;top:1222px;width:183.1px;height:28px"><i></i><b>KSHMR_Sweep</b></div><div class="r" style="left:20.3px;top:1250px;width:46.4px;height:28px"><i></i><b>VE</b></div><div class="r" style="left:430.2px;top:1250px;width:54.2px;height:28px"><i></i><b>VE</b></div><div class="r" style="left:639.9px;top:1250px;width:52.9px;height:28px"><i></i><b>VE</b></div><div class="r" style="left:848.5px;top:1250px;width:54.2px;height:28px"><i></i><b>VE</b></div><div class="r" style="left:1058.7px;top:1250px;width:51.4px;height:28px"><i></i><b>VE</b></div><div class="r" style="left:1292.4px;top:1250px;width:54px;height:28px"><i></i><b>VE</b></div><div class="r" style="left:1712.2px;top:1250px;width:52.2px;height:28px"><i></i><b>VE</b></div><div class="r" style="left:1920.8px;top:1250px;width:53.7px;height:28px"><i></i><b>VE</b></div><div class="r" style="left:2130.5px;top:1250px;width:52.2px;height:28px"><i></i><b>VE</b></div><div class="r" style="left:2338.6px;top:1250px;width:54px;height:28px"><i></i><b>VE</b></div><div class="r" style="left:436px;top:1278px;width:22px;height:28px"><i></i></div><div class="r" style="left:646.4px;top:1278px;width:21.8px;height:28px"><i></i></div><div class="r" style="left:854px;top:1278px;width:22.3px;height:28px"><i></i></div><div class="r" style="left:1064.7px;top:1278px;width:21.8px;height:28px"><i></i></div><div class="r" style="left:1300.5px;top:1278px;width:20.5px;height:28px"><i></i></div><div class="r c" style="left:1718.7px;top:1278px;width:19.7px;height:28px"><i style="border-radius:1.500px"></i></div><div class="r" style="left:1926px;top:1278px;width:22.4px;height:28px"><i></i></div><div class="r" style="left:2136.5px;top:1278px;width:21px;height:28px"><i></i></div><div class="r" style="left:2344px;top:1278px;width:21.9px;height:28px"><i></i></div><div class="r" style="left:358px;top:1306px;width:132px;height:28px"><i></i><b>VEDM3 To</b></div><div class="r" style="left:1534px;top:1306px;width:238px;height:28px"><i></i><b>VEDM3 Tonal Riser 0</b></div><div class="r" style="left:424.2px;top:1334px;width:44.3px;height:28px"><i></i><b>D</b></div><div class="r c" style="left:564.6px;top:1334px;width:17.4px;height:28px"><i style="border-radius:1.500px"></i></div><div class="r" style="left:643px;top:1334px;width:59.2px;height:28px"><i></i><b>DAL</b></div><div class="r" style="left:1077px;top:1334px;width:45.6px;height:28px"><i></i><b>DA</b></div><div class="r c" style="left:1218.1px;top:1334px;width:6.4px;height:28px"><i style="border-radius:1.500px"></i></div><div class="r" style="left:1222.8px;top:1334px;width:29.7px;height:28px"><i></i></div><div class="r c" style="left:1270.4px;top:1334px;width:6.4px;height:28px"><i style="border-radius:1.500px"></i></div><div class="r" style="left:1275.1px;top:1334px;width:29.7px;height:28px"><i></i></div><div class="r" style="left:1523.5px;top:1334px;width:42.5px;height:28px"><i></i><b>D</b></div><div class="r" style="left:1704.4px;top:1334px;width:38.3px;height:28px"><i></i><b>D</b></div><div class="r" style="left:2358.7px;top:1334px;width:42.7px;height:28px"><i></i><b>D</b></div><div class="r" style="left:2122.6px;top:1362px;width:37.5px;height:28px"><i></i><b>D</b></div><div class="r" style="left:255px;top:1390px;width:53px;height:28px"><i></i><b>VE</b></div><div class="r" style="left:306px;top:1390px;width:54px;height:28px"><i></i><b>VE</b></div><div class="r" style="left:672px;top:1390px;width:54px;height:28px"><i></i><b>VE</b></div><div class="r" style="left:724px;top:1390px;width:54px;height:28px"><i></i><b>VE</b></div><div class="r" style="left:776px;top:1390px;width:54px;height:28px"><i></i><b>VE</b></div><div class="r" style="left:828px;top:1390px;width:48.1px;height:28px"><i></i><b>VE</b></div><div class="r" style="left:880px;top:1390px;width:54px;height:28px"><i></i><b>VE</b></div><div class="r" style="left:932px;top:1390px;width:56px;height:28px"><i></i><b>VE</b></div><div class="r" style="left:986px;top:1390px;width:54px;height:28px"><i></i><b>VE</b></div><div class="r" style="left:1038px;top:1390px;width:47.2px;height:28px"><i></i><b>VE</b></div><div class="r" style="left:1744px;top:1390px;width:54px;height:28px"><i></i><b>VE</b></div><div class="r" style="left:1796px;top:1390px;width:54px;height:28px"><i></i><b>VE</b></div><div class="r" style="left:1848px;top:1390px;width:54px;height:28px"><i></i><b>VE</b></div><div class="r" style="left:1900px;top:1390px;width:47.9px;height:28px"><i></i><b>VE</b></div><div class="r" style="left:1952px;top:1390px;width:54px;height:28px"><i></i><b>VE</b></div><div class="r" style="left:2004px;top:1390px;width:56px;height:28px"><i></i><b>VE</b></div><div class="r" style="left:2058px;top:1390px;width:54px;height:28px"><i></i><b>VE</b></div><div class="r" style="left:2110px;top:1390px;width:47px;height:28px"><i></i><b>VE</b></div><div class="r" style="left:2162px;top:1390px;width:54px;height:28px"><i></i><b>VE</b></div><div class="r" style="left:2214px;top:1390px;width:54px;height:28px"><i></i><b>VE</b></div><div class="r" style="left:2266px;top:1390px;width:54px;height:28px"><i></i><b>VE</b></div><div class="r" style="left:2318px;top:1390px;width:48.1px;height:28px"><i></i><b>VE</b></div><div class="r" style="left:1326.6px;top:1390px;width:53.4px;height:28px"><i></i><b>VE</b></div><div class="r" style="left:1378px;top:1390px;width:54px;height:28px"><i></i><b>VE</b></div><div class="r" style="left:1430px;top:1390px;width:54px;height:28px"><i></i><b>VE</b></div><div class="r" style="left:1482px;top:1390px;width:54px;height:28px"><i></i><b>VE</b></div><div class="r g" style="left:463.4px;top:1418px;width:106.5px;height:28px"><i></i><b>BS - Sub</b></div><div class="r g" style="left:569.3px;top:1418px;width:78.8px;height:28px"><i></i><b>BS -</b></div><div class="r g" style="left:672px;top:1418px;width:106px;height:28px"><i></i><b>BS - Su</b></div><div class="r g" style="left:776px;top:1418px;width:99.8px;height:28px"><i></i><b>BS - Su</b></div><div class="r g" style="left:880px;top:1418px;width:108px;height:28px"><i></i><b>BS - Sub</b></div><div class="r g" style="left:986px;top:1418px;width:100.5px;height:28px"><i></i><b>BS - Su</b></div><div class="r g" style="left:1744px;top:1418px;width:106px;height:28px"><i></i><b>BS - Su</b></div><div class="r g" style="left:1848px;top:1418px;width:99.9px;height:28px"><i></i><b>BS - Su</b></div><div class="r g" style="left:1952px;top:1418px;width:108px;height:28px"><i></i><b>BS - Sub</b></div><div class="r g" style="left:2058px;top:1418px;width:98.7px;height:28px"><i></i><b>BS - Su</b></div><div class="r g" style="left:2162px;top:1418px;width:106px;height:28px"><i></i><b>BS - Su</b></div><div class="r g" style="left:2266px;top:1418px;width:99.6px;height:28px"><i></i><b>BS - Su</b></div><div class="r g" style="left:463.4px;top:1446px;width:106.5px;height:28px"><i></i><b>BS - Sub</b></div><div class="r g" style="left:569.3px;top:1446px;width:45.4px;height:28px"><i></i><b>BS</b></div><div class="r g c" style="left:617.6px;top:1446px;width:2.7px;height:28px"><i style="border-radius:1.500px"></i></div><div class="r g" style="left:620.8px;top:1446px;width:39.6px;height:28px"><i></i><b>B</b></div><div class="r g" style="left:672px;top:1446px;width:106px;height:28px"><i></i><b>BS - Su</b></div><div class="r g" style="left:776px;top:1446px;width:99.8px;height:28px"><i></i><b>BS - Su</b></div><div class="r g" style="left:880px;top:1446px;width:108px;height:28px"><i></i><b>BS - Sub</b></div><div class="r g" style="left:986px;top:1446px;width:100.5px;height:28px"><i></i><b>BS - Su</b></div><div class="r g" style="left:1744px;top:1446px;width:106px;height:28px"><i></i><b>BS - Su</b></div><div class="r g" style="left:1848px;top:1446px;width:99.9px;height:28px"><i></i><b>BS - Su</b></div><div class="r g" style="left:1952px;top:1446px;width:108px;height:28px"><i></i><b>BS - Sub</b></div><div class="r g" style="left:2058px;top:1446px;width:98.7px;height:28px"><i></i><b>BS - Su</b></div><div class="r g" style="left:2162px;top:1446px;width:106px;height:28px"><i></i><b>BS - Su</b></div><div class="r g" style="left:2266px;top:1446px;width:99.6px;height:28px"><i></i><b>BS - Su</b></div><div class="r g" style="left:672px;top:1474px;width:106px;height:28px"><i></i><b>BS - Su</b></div><div class="r g" style="left:776px;top:1474px;width:99.8px;height:28px"><i></i><b>BS - Su</b></div><div class="r g" style="left:880px;top:1474px;width:108px;height:28px"><i></i><b>BS - Sub</b></div><div class="r g" style="left:986px;top:1474px;width:100.5px;height:28px"><i></i><b>BS - Su</b></div><div class="r g" style="left:1744px;top:1474px;width:106px;height:28px"><i></i><b>BS - Su</b></div><div class="r g" style="left:1848px;top:1474px;width:99.9px;height:28px"><i></i><b>BS - Su</b></div><div class="r g" style="left:1952px;top:1474px;width:108px;height:28px"><i></i><b>BS - Sub</b></div><div class="r g" style="left:2058px;top:1474px;width:98.7px;height:28px"><i></i><b>BS - Su</b></div><div class="r g" style="left:2162px;top:1474px;width:106px;height:28px"><i></i><b>BS - Su</b></div><div class="r g" style="left:2266px;top:1474px;width:99.6px;height:28px"><i></i><b>BS - Su</b></div><div class="r c" style="border-radius:3.5px 2px 2px 2px;left:462px;top:358px;width:8px;height:28px"><i style="border-radius:2.5px 1px 1px 2.5px"></i></div><div class="r c" style="border-radius:2px 2px 2px 2px;left:468px;top:358px;width:16px;height:28px"><i style="border-radius:1px 1px 1px 1px"></i></div><div class="r c" style="border-radius:2px 2px 2px 2px;left:482px;top:358px;width:8px;height:28px"><i style="border-radius:1px 1px 1px 1px"></i></div><div class="r c" style="border-radius:2px 2px 2px 2px;left:488px;top:358px;width:16px;height:28px"><i style="border-radius:1px 1px 1px 1px"></i></div><div class="r c" style="border-radius:2px 2px 2px 2px;left:502px;top:358px;width:8px;height:28px"><i style="border-radius:1px 1px 1px 1px"></i></div><div class="r c" style="border-radius:2px 2px 2px 2px;left:508px;top:358px;width:16px;height:28px"><i style="border-radius:1px 1px 1px 1px"></i></div><div class="r c" style="border-radius:2px 2px 2px 2px;left:522px;top:358px;width:8px;height:28px"><i style="border-radius:1px 1px 1px 1px"></i></div><div class="r c" style="border-radius:2px 2px 2px 2px;left:528px;top:358px;width:14px;height:28px"><i style="border-radius:1px 1px 1px 1px"></i></div><div class="r c" style="border-radius:2px 2px 2px 2px;left:540px;top:358px;width:10px;height:28px"><i style="border-radius:1px 1px 1px 1px"></i></div><div class="r c" style="border-radius:2px 2px 2px 2px;left:548px;top:358px;width:8px;height:28px"><i style="border-radius:1px 1px 1px 1px"></i></div><div class="r c" style="border-radius:2px 2px 2px 2px;left:554px;top:358px;width:16px;height:28px"><i style="border-radius:1px 1px 1px 1px"></i></div><div class="r c" style="border-radius:2px 2px 2px 2px;left:568px;top:358px;width:14px;height:28px"><i style="border-radius:1px 1px 1px 1px"></i></div><div class="r c" style="border-radius:2px 2px 2px 2px;left:580px;top:358px;width:8px;height:28px"><i style="border-radius:1px 1px 1px 1px"></i></div><div class="r c" style="border-radius:2px 2px 2px 2px;left:586px;top:358px;width:16px;height:28px"><i style="border-radius:1px 1px 1px 1px"></i></div><div class="r c" style="border-radius:2px 2px 2px 2px;left:600px;top:358px;width:14px;height:28px"><i style="border-radius:1px 1px 1px 1px"></i></div><div class="r c" style="border-radius:2px 2px 2px 2px;left:612px;top:358px;width:10px;height:28px"><i style="border-radius:1px 1px 1px 1px"></i></div><div class="r c" style="border-radius:2px 2px 2px 2px;left:620px;top:358px;width:14px;height:28px"><i style="border-radius:1px 1px 1px 1px"></i></div><div class="r c" style="border-radius:2px 2px 2px 2px;left:632px;top:358px;width:8px;height:28px"><i style="border-radius:1px 1px 1px 1px"></i></div><div class="r c" style="border-radius:2px 3.5px 2px 2px;left:638px;top:358px;width:17.9px;height:28px"><i style="border-radius:1px 2.5px 2.5px 1px"></i></div><div class="r c" style="border-radius:3.5px 2px 2px 2px;left:672px;top:358px;width:8px;height:28px"><i style="border-radius:2.5px 1px 1px 2.5px"></i></div><div class="r c" style="border-radius:2px 2px 2px 2px;left:678px;top:358px;width:16px;height:28px"><i style="border-radius:1px 1px 1px 1px"></i></div><div class="r c" style="border-radius:2px 2px 2px 2px;left:692px;top:358px;width:8px;height:28px"><i style="border-radius:1px 1px 1px 1px"></i></div><div class="r c" style="border-radius:2px 2px 2px 2px;left:698px;top:358px;width:14px;height:28px"><i style="border-radius:1px 1px 1px 1px"></i></div><div class="r c" style="border-radius:2px 2px 2px 2px;left:710px;top:358px;width:10px;height:28px"><i style="border-radius:1px 1px 1px 1px"></i></div><div class="r c" style="border-radius:2px 2px 2px 2px;left:718px;top:358px;width:14px;height:28px"><i style="border-radius:1px 1px 1px 1px"></i></div><div class="r c" style="border-radius:2px 2px 2px 2px;left:730px;top:358px;width:10px;height:28px"><i style="border-radius:1px 1px 1px 1px"></i></div><div class="r c" style="border-radius:2px 2px 2px 2px;left:738px;top:358px;width:14px;height:28px"><i style="border-radius:1px 1px 1px 1px"></i></div><div class="r c" style="border-radius:2px 2px 2px 2px;left:750px;top:358px;width:8px;height:28px"><i style="border-radius:1px 1px 1px 1px"></i></div><div class="r c" style="border-radius:2px 2px 2px 2px;left:756px;top:358px;width:10px;height:28px"><i style="border-radius:1px 1px 1px 1px"></i></div><div class="r c" style="border-radius:2px 3.5px 2px 2px;left:764px;top:358px;width:15.2px;height:28px"><i style="border-radius:1px 2.5px 2.5px 1px"></i></div><div class="r c" style="border-radius:3.5px 2px 2px 2px;left:780.2px;top:358px;width:10px;height:28px"><i style="border-radius:2.5px 1px 1px 2.5px"></i></div><div class="r c" style="border-radius:2px 2px 2px 2px;left:788.2px;top:358px;width:14px;height:28px"><i style="border-radius:1px 1px 1px 1px"></i></div><div class="r c" style="border-radius:2px 2px 2px 2px;left:800.2px;top:358px;width:8px;height:28px"><i style="border-radius:1px 1px 1px 1px"></i></div><div class="r c" style="border-radius:2px 2px 2px 2px;left:806.2px;top:358px;width:16px;height:28px"><i style="border-radius:1px 1px 1px 1px"></i></div><div class="r c" style="border-radius:2px 2px 2px 2px;left:820.2px;top:358px;width:8px;height:28px"><i style="border-radius:1px 1px 1px 1px"></i></div><div class="r c" style="border-radius:2px 2px 2px 2px;left:826.2px;top:358px;width:16px;height:28px"><i style="border-radius:1px 1px 1px 1px"></i></div><div class="r c" style="border-radius:2px 2px 2px 2px;left:840.2px;top:358px;width:8px;height:28px"><i style="border-radius:1px 1px 1px 1px"></i></div><div class="r c" style="border-radius:5px 5px 2px 2px;left:846.2px;top:358px;width:20.1px;height:28px"><i style="border-radius:4px 4px 4px 4px"></i></div><div class="r c" style="border-radius:3.5px 2px 2px 2px;left:880px;top:358px;width:8px;height:28px"><i style="border-radius:2.5px 1px 1px 2.5px"></i></div><div class="r c" style="border-radius:2px 2px 2px 2px;left:886px;top:358px;width:16px;height:28px"><i style="border-radius:1px 1px 1px 1px"></i></div><div class="r c" style="border-radius:2px 2px 2px 2px;left:900px;top:358px;width:8px;height:28px"><i style="border-radius:1px 1px 1px 1px"></i></div><div class="r c" style="border-radius:2px 2px 2px 2px;left:906px;top:358px;width:16px;height:28px"><i style="border-radius:1px 1px 1px 1px"></i></div><div class="r c" style="border-radius:2px 2px 2px 2px;left:920px;top:358px;width:8px;height:28px"><i style="border-radius:1px 1px 1px 1px"></i></div><div class="r c" style="border-radius:2px 2px 2px 2px;left:926px;top:358px;width:16px;height:28px"><i style="border-radius:1px 1px 1px 1px"></i></div><div class="r c" style="border-radius:2px 2px 2px 2px;left:940px;top:358px;width:8px;height:28px"><i style="border-radius:1px 1px 1px 1px"></i></div><div class="r c" style="border-radius:2px 2px 2px 2px;left:946px;top:358px;width:14px;height:28px"><i style="border-radius:1px 1px 1px 1px"></i></div><div class="r c" style="border-radius:2px 2px 2px 2px;left:958px;top:358px;width:10px;height:28px"><i style="border-radius:1px 1px 1px 1px"></i></div><div class="r c" style="border-radius:2px 2px 2px 2px;left:966px;top:358px;width:8px;height:28px"><i style="border-radius:1px 1px 1px 1px"></i></div><div class="r c" style="border-radius:2px 2px 2px 2px;left:972px;top:358px;width:16px;height:28px"><i style="border-radius:1px 1px 1px 1px"></i></div><div class="r c" style="border-radius:2px 2px 2px 2px;left:986px;top:358px;width:14px;height:28px"><i style="border-radius:1px 1px 1px 1px"></i></div><div class="r c" style="border-radius:2px 2px 2px 2px;left:998px;top:358px;width:8px;height:28px"><i style="border-radius:1px 1px 1px 1px"></i></div><div class="r c" style="border-radius:2px 2px 2px 2px;left:1004px;top:358px;width:16px;height:28px"><i style="border-radius:1px 1px 1px 1px"></i></div><div class="r c" style="border-radius:2px 2px 2px 2px;left:1018px;top:358px;width:14px;height:28px"><i style="border-radius:1px 1px 1px 1px"></i></div><div class="r c" style="border-radius:2px 2px 2px 2px;left:1030px;top:358px;width:10px;height:28px"><i style="border-radius:1px 1px 1px 1px"></i></div><div class="r c" style="border-radius:2px 2px 2px 2px;left:1038px;top:358px;width:14px;height:28px"><i style="border-radius:1px 1px 1px 1px"></i></div><div class="r c" style="border-radius:2px 2px 2px 2px;left:1050px;top:358px;width:8px;height:28px"><i style="border-radius:1px 1px 1px 1px"></i></div><div class="r c" style="border-radius:5px 5px 2px 2px;left:1056px;top:358px;width:20.2px;height:28px"><i style="border-radius:4px 4px 4px 4px"></i></div><div class="r c" style="border-radius:3.5px 2px 2px 2px;left:1744px;top:358px;width:8px;height:28px"><i style="border-radius:2.5px 1px 1px 2.5px"></i></div><div class="r c" style="border-radius:2px 2px 2px 2px;left:1750px;top:358px;width:16px;height:28px"><i style="border-radius:1px 1px 1px 1px"></i></div><div class="r c" style="border-radius:2px 2px 2px 2px;left:1764px;top:358px;width:8px;height:28px"><i style="border-radius:1px 1px 1px 1px"></i></div><div class="r c" style="border-radius:2px 2px 2px 2px;left:1770px;top:358px;width:16px;height:28px"><i style="border-radius:1px 1px 1px 1px"></i></div><div class="r c" style="border-radius:2px 2px 2px 2px;left:1784px;top:358px;width:8px;height:28px"><i style="border-radius:1px 1px 1px 1px"></i></div><div class="r c" style="border-radius:2px 2px 2px 2px;left:1790px;top:358px;width:16px;height:28px"><i style="border-radius:1px 1px 1px 1px"></i></div><div class="r c" style="border-radius:2px 2px 2px 2px;left:1804px;top:358px;width:8px;height:28px"><i style="border-radius:1px 1px 1px 1px"></i></div><div class="r c" style="border-radius:2px 2px 2px 2px;left:1810px;top:358px;width:14px;height:28px"><i style="border-radius:1px 1px 1px 1px"></i></div><div class="r c" style="border-radius:2px 2px 2px 2px;left:1822px;top:358px;width:10px;height:28px"><i style="border-radius:1px 1px 1px 1px"></i></div><div class="r c" style="border-radius:2px 2px 2px 2px;left:1830px;top:358px;width:8px;height:28px"><i style="border-radius:1px 1px 1px 1px"></i></div><div class="r c" style="border-radius:2px 2px 2px 2px;left:1836px;top:358px;width:16px;height:28px"><i style="border-radius:1px 1px 1px 1px"></i></div><div class="r c" style="border-radius:2px 2px 2px 2px;left:1850px;top:358px;width:14px;height:28px"><i style="border-radius:1px 1px 1px 1px"></i></div><div class="r c" style="border-radius:2px 2px 2px 2px;left:1862px;top:358px;width:8px;height:28px"><i style="border-radius:1px 1px 1px 1px"></i></div><div class="r c" style="border-radius:2px 2px 2px 2px;left:1868px;top:358px;width:16px;height:28px"><i style="border-radius:1px 1px 1px 1px"></i></div><div class="r c" style="border-radius:2px 2px 2px 2px;left:1882px;top:358px;width:14px;height:28px"><i style="border-radius:1px 1px 1px 1px"></i></div><div class="r c" style="border-radius:2px 2px 2px 2px;left:1894px;top:358px;width:10px;height:28px"><i style="border-radius:1px 1px 1px 1px"></i></div><div class="r c" style="border-radius:2px 2px 2px 2px;left:1902px;top:358px;width:14px;height:28px"><i style="border-radius:1px 1px 1px 1px"></i></div><div class="r c" style="border-radius:2px 2px 2px 2px;left:1914px;top:358px;width:8px;height:28px"><i style="border-radius:1px 1px 1px 1px"></i></div><div class="r c" style="border-radius:2px 3.5px 2px 2px;left:1920px;top:358px;width:16.8px;height:28px"><i style="border-radius:1px 2.5px 2.5px 1px"></i></div><div class="r c" style="border-radius:3.5px 2px 2px 2px;left:1952px;top:358px;width:8px;height:28px"><i style="border-radius:2.5px 1px 1px 2.5px"></i></div><div class="r c" style="border-radius:2px 2px 2px 2px;left:1958px;top:358px;width:16px;height:28px"><i style="border-radius:1px 1px 1px 1px"></i></div><div class="r c" style="border-radius:2px 2px 2px 2px;left:1972px;top:358px;width:8px;height:28px"><i style="border-radius:1px 1px 1px 1px"></i></div><div class="r c" style="border-radius:2px 2px 2px 2px;left:1978px;top:358px;width:16px;height:28px"><i style="border-radius:1px 1px 1px 1px"></i></div><div class="r c" style="border-radius:2px 2px 2px 2px;left:1992px;top:358px;width:8px;height:28px"><i style="border-radius:1px 1px 1px 1px"></i></div><div class="r c" style="border-radius:2px 2px 2px 2px;left:1998px;top:358px;width:16px;height:28px"><i style="border-radius:1px 1px 1px 1px"></i></div><div class="r c" style="border-radius:2px 2px 2px 2px;left:2012px;top:358px;width:8px;height:28px"><i style="border-radius:1px 1px 1px 1px"></i></div><div class="r c" style="border-radius:2px 2px 2px 2px;left:2018px;top:358px;width:14px;height:28px"><i style="border-radius:1px 1px 1px 1px"></i></div><div class="r c" style="border-radius:2px 2px 2px 2px;left:2030px;top:358px;width:10px;height:28px"><i style="border-radius:1px 1px 1px 1px"></i></div><div class="r c" style="border-radius:2px 2px 2px 2px;left:2038px;top:358px;width:8px;height:28px"><i style="border-radius:1px 1px 1px 1px"></i></div><div class="r c" style="border-radius:2px 2px 2px 2px;left:2044px;top:358px;width:16px;height:28px"><i style="border-radius:1px 1px 1px 1px"></i></div><div class="r c" style="border-radius:2px 2px 2px 2px;left:2058px;top:358px;width:14px;height:28px"><i style="border-radius:1px 1px 1px 1px"></i></div><div class="r c" style="border-radius:2px 2px 2px 2px;left:2070px;top:358px;width:8px;height:28px"><i style="border-radius:1px 1px 1px 1px"></i></div><div class="r c" style="border-radius:2px 2px 2px 2px;left:2076px;top:358px;width:16px;height:28px"><i style="border-radius:1px 1px 1px 1px"></i></div><div class="r c" style="border-radius:2px 2px 2px 2px;left:2090px;top:358px;width:14px;height:28px"><i style="border-radius:1px 1px 1px 1px"></i></div><div class="r c" style="border-radius:2px 2px 2px 2px;left:2102px;top:358px;width:10px;height:28px"><i style="border-radius:1px 1px 1px 1px"></i></div><div class="r c" style="border-radius:2px 2px 2px 2px;left:2110px;top:358px;width:14px;height:28px"><i style="border-radius:1px 1px 1px 1px"></i></div><div class="r c" style="border-radius:2px 2px 2px 2px;left:2122px;top:358px;width:8px;height:28px"><i style="border-radius:1px 1px 1px 1px"></i></div><div class="r c" style="border-radius:2px 3.5px 2px 2px;left:2128px;top:358px;width:19.3px;height:28px"><i style="border-radius:1px 2.5px 2.5px 1px"></i></div><div class="r c" style="border-radius:3.5px 2px 2px 2px;left:2162px;top:358px;width:8px;height:28px"><i style="border-radius:2.5px 1px 1px 2.5px"></i></div><div class="r c" style="border-radius:2px 2px 2px 2px;left:2168px;top:358px;width:16px;height:28px"><i style="border-radius:1px 1px 1px 1px"></i></div><div class="r c" style="border-radius:2px 2px 2px 2px;left:2182px;top:358px;width:8px;height:28px"><i style="border-radius:1px 1px 1px 1px"></i></div><div class="r c" style="border-radius:2px 2px 2px 2px;left:2188px;top:358px;width:14px;height:28px"><i style="border-radius:1px 1px 1px 1px"></i></div><div class="r c" style="border-radius:2px 2px 2px 2px;left:2200px;top:358px;width:10px;height:28px"><i style="border-radius:1px 1px 1px 1px"></i></div><div class="r c" style="border-radius:2px 2px 2px 2px;left:2208px;top:358px;width:14px;height:28px"><i style="border-radius:1px 1px 1px 1px"></i></div><div class="r c" style="border-radius:2px 2px 2px 2px;left:2220px;top:358px;width:10px;height:28px"><i style="border-radius:1px 1px 1px 1px"></i></div><div class="r c" style="border-radius:2px 2px 2px 2px;left:2228px;top:358px;width:14px;height:28px"><i style="border-radius:1px 1px 1px 1px"></i></div><div class="r c" style="border-radius:2px 2px 2px 2px;left:2240px;top:358px;width:8px;height:28px"><i style="border-radius:1px 1px 1px 1px"></i></div><div class="r c" style="border-radius:2px 2px 2px 2px;left:2246px;top:358px;width:10px;height:28px"><i style="border-radius:1px 1px 1px 1px"></i></div><div class="r c" style="border-radius:2px 3.5px 2px 2px;left:2254px;top:358px;width:14px;height:28px"><i style="border-radius:1px 2.5px 2.5px 1px"></i></div><div class="r c" style="border-radius:3.5px 2px 2px 2px;left:2269px;top:358px;width:10px;height:28px"><i style="border-radius:2.5px 1px 1px 2.5px"></i></div><div class="r c" style="border-radius:2px 2px 2px 2px;left:2277px;top:358px;width:14px;height:28px"><i style="border-radius:1px 1px 1px 1px"></i></div><div class="r c" style="border-radius:2px 2px 2px 2px;left:2289px;top:358px;width:8px;height:28px"><i style="border-radius:1px 1px 1px 1px"></i></div><div class="r c" style="border-radius:2px 2px 2px 2px;left:2295px;top:358px;width:16px;height:28px"><i style="border-radius:1px 1px 1px 1px"></i></div><div class="r c" style="border-radius:2px 2px 2px 2px;left:2309px;top:358px;width:8px;height:28px"><i style="border-radius:1px 1px 1px 1px"></i></div><div class="r c" style="border-radius:2px 2px 2px 2px;left:2315px;top:358px;width:16px;height:28px"><i style="border-radius:1px 1px 1px 1px"></i></div><div class="r c" style="border-radius:2px 2px 2px 2px;left:2329px;top:358px;width:8px;height:28px"><i style="border-radius:1px 1px 1px 1px"></i></div><div class="r c" style="border-radius:5px 5px 2px 2px;left:2335px;top:358px;width:20.1px;height:28px"><i style="border-radius:4px 4px 4px 4px"></i></div><div class="r c" style="border-radius:3.5px 2px 2px 2px;left:156.2px;top:442px;width:15.6px;height:28px"><i style="border-radius:2.5px 1px 1px 2.5px"></i></div><div class="r c" style="border-radius:2px 2px 2px 2px;left:169.8px;top:442px;width:15.6px;height:28px"><i style="border-radius:1px 1px 1px 1px"></i></div><div class="r c" style="border-radius:2px 2px 2px 2px;left:183.4px;top:442px;width:15.6px;height:28px"><i style="border-radius:1px 1px 1px 1px"></i></div><div class="r c" style="border-radius:2px 2px 2px 2px;left:197px;top:442px;width:15.6px;height:28px"><i style="border-radius:1px 1px 1px 1px"></i></div><div class="r c" style="border-radius:2px 2px 2px 2px;left:210.6px;top:442px;width:15.6px;height:28px"><i style="border-radius:1px 1px 1px 1px"></i></div><div class="r c" style="border-radius:2px 3.5px 2px 2px;left:224.2px;top:442px;width:13.9px;height:28px"><i style="border-radius:1px 2.5px 2.5px 1px"></i></div><div class="r c" style="border-radius:3.5px 2px 2px 2px;left:1122.4px;top:442px;width:15.3px;height:28px"><i style="border-radius:2.5px 1px 1px 2.5px"></i></div><div class="r c" style="border-radius:2px 2px 2px 2px;left:1135.8px;top:442px;width:15.3px;height:28px"><i style="border-radius:1px 1px 1px 1px"></i></div><div class="r c" style="border-radius:2px 2px 2px 2px;left:1149.1px;top:442px;width:15.3px;height:28px"><i style="border-radius:1px 1px 1px 1px"></i></div><div class="r c" style="border-radius:2px 2px 2px 2px;left:1162.5px;top:442px;width:15.3px;height:28px"><i style="border-radius:1px 1px 1px 1px"></i></div><div class="r c" style="border-radius:2px 2px 2px 2px;left:1175.8px;top:442px;width:15.3px;height:28px"><i style="border-radius:1px 1px 1px 1px"></i></div><div class="r c" style="border-radius:2px 2px 2px 2px;left:1189.2px;top:442px;width:15.3px;height:28px"><i style="border-radius:1px 1px 1px 1px"></i></div><div class="r c" style="border-radius:2px 2px 2px 2px;left:1202.5px;top:442px;width:15.3px;height:28px"><i style="border-radius:1px 1px 1px 1px"></i></div><div class="r c" style="border-radius:2px 2px 2px 2px;left:1215.9px;top:442px;width:15.3px;height:28px"><i style="border-radius:1px 1px 1px 1px"></i></div><div class="r c" style="border-radius:2px 2px 2px 2px;left:1229.2px;top:442px;width:15.3px;height:28px"><i style="border-radius:1px 1px 1px 1px"></i></div><div class="r c" style="border-radius:2px 2px 2px 2px;left:1242.6px;top:442px;width:15.3px;height:28px"><i style="border-radius:1px 1px 1px 1px"></i></div><div class="r c" style="border-radius:2px 2px 2px 2px;left:1255.9px;top:442px;width:15.3px;height:28px"><i style="border-radius:1px 1px 1px 1px"></i></div><div class="r c" style="border-radius:2px 2px 2px 2px;left:1269.3px;top:442px;width:15.3px;height:28px"><i style="border-radius:1px 1px 1px 1px"></i></div><div class="r c" style="border-radius:2px 2px 2px 2px;left:1282.6px;top:442px;width:15.3px;height:28px"><i style="border-radius:1px 1px 1px 1px"></i></div><div class="r c" style="border-radius:2px 3.5px 2px 2px;left:1296px;top:442px;width:14.2px;height:28px"><i style="border-radius:1px 2.5px 2.5px 1px"></i></div><div class="r c" style="border-radius:3.5px 2px 2px 2px;left:1436.7px;top:442px;width:15.8px;height:28px"><i style="border-radius:2.5px 1px 1px 2.5px"></i></div><div class="r c" style="border-radius:2px 2px 2px 2px;left:1450.5px;top:442px;width:15.8px;height:28px"><i style="border-radius:1px 1px 1px 1px"></i></div><div class="r c" style="border-radius:2px 2px 2px 2px;left:1464.3px;top:442px;width:15.8px;height:28px"><i style="border-radius:1px 1px 1px 1px"></i></div><div class="r c" style="border-radius:2px 2px 2px 2px;left:1478.1px;top:442px;width:15.8px;height:28px"><i style="border-radius:1px 1px 1px 1px"></i></div><div class="r c" style="border-radius:2px 2px 2px 2px;left:1491.9px;top:442px;width:15.8px;height:28px"><i style="border-radius:1px 1px 1px 1px"></i></div><div class="r c" style="border-radius:2px 3.5px 2px 2px;left:1505.7px;top:442px;width:15px;height:28px"><i style="border-radius:1px 2.5px 2.5px 1px"></i></div><div class="r c" style="border-radius:3.5px 2px 2px 2px;left:39.9px;top:1334px;width:9.8px;height:28px"><i style="border-radius:2.5px 1px 1px 2.5px"></i></div><div class="r c" style="border-radius:5px 5px 2px 2px;left:47.6px;top:1334px;width:28.1px;height:28px"><i style="border-radius:4px 4px 4px 4px"></i></div><div class="r c" style="border-radius:5px 5px 2px 2px;left:73.7px;top:1334px;width:22.4px;height:28px"><i style="border-radius:4px 4px 4px 4px"></i></div><div class="r c" style="border-radius:2px 2px 2px 2px;left:94.1px;top:1334px;width:7.7px;height:28px"><i style="border-radius:1px 1px 1px 1px"></i></div><div class="r c" style="border-radius:2px 2px 2px 2px;left:99.8px;top:1334px;width:12px;height:28px"><i style="border-radius:1px 1px 1px 1px"></i></div><div class="r c" style="border-radius:2px 2px 2px 2px;left:109.8px;top:1334px;width:14px;height:28px"><i style="border-radius:1px 1px 1px 1px"></i></div><div class="r c" style="border-radius:2px 2px 2px 2px;left:121.8px;top:1334px;width:16.3px;height:28px"><i style="border-radius:1px 1px 1px 1px"></i></div><div class="r c" style="border-radius:2px 2px 2px 2px;left:136.1px;top:1334px;width:12px;height:28px"><i style="border-radius:1px 1px 1px 1px"></i></div><div class="r c" style="border-radius:2px 2px 2px 2px;left:146.1px;top:1334px;width:7.5px;height:28px"><i style="border-radius:1px 1px 1px 1px"></i></div><div class="r c" style="border-radius:5px 5px 2px 2px;left:151.6px;top:1334px;width:28.1px;height:28px"><i style="border-radius:4px 4px 4px 4px"></i></div><div class="r c" style="border-radius:5px 5px 2px 2px;left:177.7px;top:1334px;width:22.4px;height:28px"><i style="border-radius:4px 4px 4px 4px"></i></div><div class="r c" style="border-radius:2px 2px 2px 2px;left:198.1px;top:1334px;width:7.7px;height:28px"><i style="border-radius:1px 1px 1px 1px"></i></div><div class="r c" style="border-radius:2px 2px 2px 2px;left:203.8px;top:1334px;width:12px;height:28px"><i style="border-radius:1px 1px 1px 1px"></i></div><div class="r c" style="border-radius:2px 2px 2px 2px;left:213.8px;top:1334px;width:14px;height:28px"><i style="border-radius:1px 1px 1px 1px"></i></div><div class="r c" style="border-radius:2px 2px 2px 2px;left:225.8px;top:1334px;width:16.3px;height:28px"><i style="border-radius:1px 1px 1px 1px"></i></div><div class="r c" style="border-radius:2px 2px 2px 2px;left:240.1px;top:1334px;width:12px;height:28px"><i style="border-radius:1px 1px 1px 1px"></i></div><div class="r c" style="border-radius:2px 2px 2px 2px;left:250.1px;top:1334px;width:7.5px;height:28px"><i style="border-radius:1px 1px 1px 1px"></i></div><div class="r c" style="border-radius:5px 5px 2px 2px;left:255.6px;top:1334px;width:28.1px;height:28px"><i style="border-radius:4px 4px 4px 4px"></i></div><div class="r c" style="border-radius:5px 5px 2px 2px;left:281.7px;top:1334px;width:21.5px;height:28px"><i style="border-radius:4px 4px 4px 4px"></i></div><div class="r c" style="border-radius:2px 2px 2px 2px;left:301.2px;top:1334px;width:8.3px;height:28px"><i style="border-radius:1px 1px 1px 1px"></i></div><div class="r c" style="border-radius:2px 2px 2px 2px;left:307.5px;top:1334px;width:11.4px;height:28px"><i style="border-radius:1px 1px 1px 1px"></i></div><div class="r c" style="border-radius:2px 2px 2px 2px;left:316.9px;top:1334px;width:17.7px;height:28px"><i style="border-radius:1px 1px 1px 1px"></i></div><div class="r c" style="border-radius:2px 2px 2px 2px;left:332.6px;top:1334px;width:13px;height:28px"><i style="border-radius:1px 1px 1px 1px"></i></div><div class="r c" style="border-radius:2px 2px 2px 2px;left:343.6px;top:1334px;width:16.8px;height:28px"><i style="border-radius:1px 1px 1px 1px"></i></div><div class="r c" style="border-radius:2px 2px 2px 2px;left:358.4px;top:1334px;width:13.9px;height:28px"><i style="border-radius:1px 1px 1px 1px"></i></div><div class="r c" style="border-radius:2px 2px 2px 2px;left:370.3px;top:1334px;width:16.2px;height:28px"><i style="border-radius:1px 1px 1px 1px"></i></div><div class="r c" style="border-radius:2px 2px 2px 2px;left:384.5px;top:1334px;width:15.2px;height:28px"><i style="border-radius:1px 1px 1px 1px"></i></div><div class="r c" style="border-radius:2px 2px 2px 2px;left:397.7px;top:1334px;width:10.2px;height:28px"><i style="border-radius:1px 1px 1px 1px"></i></div><div class="r c" style="border-radius:2px 2px 2px 2px;left:405.9px;top:1334px;width:9.8px;height:28px"><i style="border-radius:1px 1px 1px 1px"></i></div><div class="r c" style="border-radius:2px 3.5px 2px 2px;left:413.7px;top:1334px;width:11.5px;height:28px"><i style="border-radius:1px 2.5px 2.5px 1px"></i></div><div class="r c" style="border-radius:3.5px 2px 2px 2px;left:879.1px;top:1334px;width:7.5px;height:28px"><i style="border-radius:2.5px 1px 1px 2.5px"></i></div><div class="r c" style="border-radius:5px 5px 2px 2px;left:884.6px;top:1334px;width:28.1px;height:28px"><i style="border-radius:4px 4px 4px 4px"></i></div><div class="r c" style="border-radius:5px 5px 2px 2px;left:910.7px;top:1334px;width:22.4px;height:28px"><i style="border-radius:4px 4px 4px 4px"></i></div><div class="r c" style="border-radius:2px 2px 2px 2px;left:931.1px;top:1334px;width:7.7px;height:28px"><i style="border-radius:1px 1px 1px 1px"></i></div><div class="r c" style="border-radius:2px 2px 2px 2px;left:936.8px;top:1334px;width:12px;height:28px"><i style="border-radius:1px 1px 1px 1px"></i></div><div class="r c" style="border-radius:2px 2px 2px 2px;left:946.8px;top:1334px;width:14px;height:28px"><i style="border-radius:1px 1px 1px 1px"></i></div><div class="r c" style="border-radius:2px 2px 2px 2px;left:958.8px;top:1334px;width:16.3px;height:28px"><i style="border-radius:1px 1px 1px 1px"></i></div><div class="r c" style="border-radius:2px 2px 2px 2px;left:973.1px;top:1334px;width:12px;height:28px"><i style="border-radius:1px 1px 1px 1px"></i></div><div class="r c" style="border-radius:2px 2px 2px 2px;left:983.1px;top:1334px;width:7.5px;height:28px"><i style="border-radius:1px 1px 1px 1px"></i></div><div class="r c" style="border-radius:5px 5px 2px 2px;left:988.6px;top:1334px;width:28.1px;height:28px"><i style="border-radius:4px 4px 4px 4px"></i></div><div class="r c" style="border-radius:5px 5px 2px 2px;left:1014.7px;top:1334px;width:22.4px;height:28px"><i style="border-radius:4px 4px 4px 4px"></i></div><div class="r c" style="border-radius:2px 2px 2px 2px;left:1035.1px;top:1334px;width:7.7px;height:28px"><i style="border-radius:1px 1px 1px 1px"></i></div><div class="r c" style="border-radius:2px 2px 2px 2px;left:1040.8px;top:1334px;width:12px;height:28px"><i style="border-radius:1px 1px 1px 1px"></i></div><div class="r c" style="border-radius:2px 2px 2px 2px;left:1050.8px;top:1334px;width:14px;height:28px"><i style="border-radius:1px 1px 1px 1px"></i></div><div class="r c" style="border-radius:2px 3.5px 2px 2px;left:1062.8px;top:1334px;width:15.3px;height:28px"><i style="border-radius:1px 2.5px 2.5px 1px"></i></div><div class="r c" style="border-radius:3.5px 2px 2px 2px;left:1322.7px;top:1334px;width:7.5px;height:28px"><i style="border-radius:2.5px 1px 1px 2.5px"></i></div><div class="r c" style="border-radius:5px 5px 2px 2px;left:1328.2px;top:1334px;width:28.1px;height:28px"><i style="border-radius:4px 4px 4px 4px"></i></div><div class="r c" style="border-radius:5px 5px 2px 2px;left:1354.3px;top:1334px;width:22.4px;height:28px"><i style="border-radius:4px 4px 4px 4px"></i></div><div class="r c" style="border-radius:2px 2px 2px 2px;left:1374.7px;top:1334px;width:7.7px;height:28px"><i style="border-radius:1px 1px 1px 1px"></i></div><div class="r c" style="border-radius:2px 2px 2px 2px;left:1380.4px;top:1334px;width:12px;height:28px"><i style="border-radius:1px 1px 1px 1px"></i></div><div class="r c" style="border-radius:2px 2px 2px 2px;left:1390.4px;top:1334px;width:14px;height:28px"><i style="border-radius:1px 1px 1px 1px"></i></div><div class="r c" style="border-radius:2px 2px 2px 2px;left:1402.4px;top:1334px;width:16.3px;height:28px"><i style="border-radius:1px 1px 1px 1px"></i></div><div class="r c" style="border-radius:2px 2px 2px 2px;left:1416.7px;top:1334px;width:12px;height:28px"><i style="border-radius:1px 1px 1px 1px"></i></div><div class="r c" style="border-radius:2px 2px 2px 2px;left:1426.7px;top:1334px;width:7.5px;height:28px"><i style="border-radius:1px 1px 1px 1px"></i></div><div class="r c" style="border-radius:5px 5px 2px 2px;left:1432.2px;top:1334px;width:28.1px;height:28px"><i style="border-radius:4px 4px 4px 4px"></i></div><div class="r c" style="border-radius:5px 5px 2px 2px;left:1458.3px;top:1334px;width:22.4px;height:28px"><i style="border-radius:4px 4px 4px 4px"></i></div><div class="r c" style="border-radius:2px 2px 2px 2px;left:1478.7px;top:1334px;width:7.7px;height:28px"><i style="border-radius:1px 1px 1px 1px"></i></div><div class="r c" style="border-radius:2px 2px 2px 2px;left:1484.4px;top:1334px;width:12px;height:28px"><i style="border-radius:1px 1px 1px 1px"></i></div><div class="r c" style="border-radius:2px 2px 2px 2px;left:1494.4px;top:1334px;width:14px;height:28px"><i style="border-radius:1px 1px 1px 1px"></i></div><div class="r c" style="border-radius:2px 3.5px 2px 2px;left:1506.4px;top:1334px;width:18.2px;height:28px"><i style="border-radius:1px 2.5px 2.5px 1px"></i></div><div class="r c" style="border-radius:3.5px 2px 2px 2px;left:1638px;top:1334px;width:12px;height:28px"><i style="border-radius:2.5px 1px 1px 2.5px"></i></div><div class="r c" style="border-radius:2px 2px 2px 2px;left:1648px;top:1334px;width:14px;height:28px"><i style="border-radius:1px 1px 1px 1px"></i></div><div class="r c" style="border-radius:2px 2px 2px 2px;left:1660px;top:1334px;width:13px;height:28px"><i style="border-radius:1px 1px 1px 1px"></i></div><div class="r c" style="border-radius:2px 2px 2px 2px;left:1671px;top:1334px;width:11px;height:28px"><i style="border-radius:1px 1px 1px 1px"></i></div><div class="r c" style="border-radius:2px 2px 2px 2px;left:1680px;top:1334px;width:7px;height:28px"><i style="border-radius:1px 1px 1px 1px"></i></div><div class="r c" style="border-radius:2px 2px 2px 2px;left:1685px;top:1334px;width:8px;height:28px"><i style="border-radius:1px 1px 1px 1px"></i></div><div class="r c" style="border-radius:2px 3.5px 2px 2px;left:1691px;top:1334px;width:14.5px;height:28px"><i style="border-radius:1px 2.5px 2.5px 1px"></i></div><div class="r c" style="border-radius:3.5px 2px 2px 2px;left:2158.4px;top:1334px;width:7.5px;height:28px"><i style="border-radius:2.5px 1px 1px 2.5px"></i></div><div class="r c" style="border-radius:5px 5px 2px 2px;left:2163.9px;top:1334px;width:28.1px;height:28px"><i style="border-radius:4px 4px 4px 4px"></i></div><div class="r c" style="border-radius:5px 5px 2px 2px;left:2190px;top:1334px;width:22.4px;height:28px"><i style="border-radius:4px 4px 4px 4px"></i></div><div class="r c" style="border-radius:2px 2px 2px 2px;left:2210.4px;top:1334px;width:7.7px;height:28px"><i style="border-radius:1px 1px 1px 1px"></i></div><div class="r c" style="border-radius:2px 2px 2px 2px;left:2216.1px;top:1334px;width:12px;height:28px"><i style="border-radius:1px 1px 1px 1px"></i></div><div class="r c" style="border-radius:2px 2px 2px 2px;left:2226.1px;top:1334px;width:14px;height:28px"><i style="border-radius:1px 1px 1px 1px"></i></div><div class="r c" style="border-radius:2px 2px 2px 2px;left:2238.1px;top:1334px;width:16.3px;height:28px"><i style="border-radius:1px 1px 1px 1px"></i></div><div class="r c" style="border-radius:2px 2px 2px 2px;left:2252.4px;top:1334px;width:12px;height:28px"><i style="border-radius:1px 1px 1px 1px"></i></div><div class="r c" style="border-radius:2px 2px 2px 2px;left:2262.4px;top:1334px;width:7.5px;height:28px"><i style="border-radius:1px 1px 1px 1px"></i></div><div class="r c" style="border-radius:5px 5px 2px 2px;left:2267.9px;top:1334px;width:28.1px;height:28px"><i style="border-radius:4px 4px 4px 4px"></i></div><div class="r c" style="border-radius:5px 5px 2px 2px;left:2294px;top:1334px;width:22.4px;height:28px"><i style="border-radius:4px 4px 4px 4px"></i></div><div class="r c" style="border-radius:2px 2px 2px 2px;left:2314.4px;top:1334px;width:7.7px;height:28px"><i style="border-radius:1px 1px 1px 1px"></i></div><div class="r c" style="border-radius:2px 2px 2px 2px;left:2320.1px;top:1334px;width:12px;height:28px"><i style="border-radius:1px 1px 1px 1px"></i></div><div class="r c" style="border-radius:2px 2px 2px 2px;left:2330.1px;top:1334px;width:14px;height:28px"><i style="border-radius:1px 1px 1px 1px"></i></div><div class="r c" style="border-radius:2px 3.5px 2px 2px;left:2342.1px;top:1334px;width:17.6px;height:28px"><i style="border-radius:1px 2.5px 2.5px 1px"></i></div><div class="r c" style="border-radius:3.5px 2px 2px 2px;left:1534px;top:1362px;width:15.4px;height:28px"><i style="border-radius:2.5px 1px 1px 2.5px"></i></div><div class="r c" style="border-radius:2px 2px 2px 2px;left:1547.4px;top:1362px;width:15.4px;height:28px"><i style="border-radius:1px 1px 1px 1px"></i></div><div class="r c" style="border-radius:2px 2px 2px 2px;left:1560.8px;top:1362px;width:15.4px;height:28px"><i style="border-radius:1px 1px 1px 1px"></i></div><div class="r c" style="border-radius:2px 2px 2px 2px;left:1574.2px;top:1362px;width:15.4px;height:28px"><i style="border-radius:1px 1px 1px 1px"></i></div><div class="r c" style="border-radius:2px 2px 2px 2px;left:1587.6px;top:1362px;width:15.4px;height:28px"><i style="border-radius:1px 1px 1px 1px"></i></div><div class="r c" style="border-radius:2px 2px 2px 2px;left:1601px;top:1362px;width:15.4px;height:28px"><i style="border-radius:1px 1px 1px 1px"></i></div><div class="r c" style="border-radius:2px 2px 2px 2px;left:1614.4px;top:1362px;width:15.4px;height:28px"><i style="border-radius:1px 1px 1px 1px"></i></div><div class="r c" style="border-radius:2px 3.5px 2px 2px;left:1627.8px;top:1362px;width:14.9px;height:28px"><i style="border-radius:1px 2.5px 2.5px 1px"></i></div><div class="r c" style="border-radius:3.5px 2px 2px 2px;left:1950.1px;top:1362px;width:7px;height:28px"><i style="border-radius:2.5px 1px 1px 2.5px"></i></div><div class="r c" style="border-radius:5px 5px 2px 2px;left:1955.1px;top:1362px;width:28px;height:28px"><i style="border-radius:4px 4px 4px 4px"></i></div><div class="r c" style="border-radius:5px 5px 2px 2px;left:1981.1px;top:1362px;width:22px;height:28px"><i style="border-radius:4px 4px 4px 4px"></i></div><div class="r c" style="border-radius:2px 2px 2px 2px;left:2001.1px;top:1362px;width:8px;height:28px"><i style="border-radius:1px 1px 1px 1px"></i></div><div class="r c" style="border-radius:2px 2px 2px 2px;left:2007.1px;top:1362px;width:12px;height:28px"><i style="border-radius:1px 1px 1px 1px"></i></div><div class="r c" style="border-radius:2px 2px 2px 2px;left:2017.1px;top:1362px;width:16px;height:28px"><i style="border-radius:1px 1px 1px 1px"></i></div><div class="r c" style="border-radius:2px 2px 2px 2px;left:2031.1px;top:1362px;width:14px;height:28px"><i style="border-radius:1px 1px 1px 1px"></i></div><div class="r c" style="border-radius:2px 2px 2px 2px;left:2043.1px;top:1362px;width:16px;height:28px"><i style="border-radius:1px 1px 1px 1px"></i></div><div class="r c" style="border-radius:2px 2px 2px 2px;left:2057.1px;top:1362px;width:14px;height:28px"><i style="border-radius:1px 1px 1px 1px"></i></div><div class="r c" style="border-radius:2px 2px 2px 2px;left:2069.1px;top:1362px;width:16.5px;height:28px"><i style="border-radius:1px 1px 1px 1px"></i></div><div class="r c" style="border-radius:2px 2px 2px 2px;left:2083.6px;top:1362px;width:14px;height:28px"><i style="border-radius:1px 1px 1px 1px"></i></div><div class="r c" style="border-radius:2px 2px 2px 2px;left:2095.6px;top:1362px;width:11.5px;height:28px"><i style="border-radius:1px 1px 1px 1px"></i></div><div class="r c" style="border-radius:2px 2px 2px 2px;left:2105.1px;top:1362px;width:7px;height:28px"><i style="border-radius:1px 1px 1px 1px"></i></div><div class="r c" style="border-radius:2px 3.5px 2px 2px;left:2110.1px;top:1362px;width:13.6px;height:28px"><i style="border-radius:1px 2.5px 2.5px 1px"></i></div><div class="r c" style="border-radius:3.5px 2px 2px 2px;left:362.8px;top:1390px;width:7.8px;height:28px"><i style="border-radius:2.5px 1px 1px 2.5px"></i></div><div class="r c" style="border-radius:2px 2px 2px 2px;left:368.6px;top:1390px;width:14.2px;height:28px"><i style="border-radius:1px 1px 1px 1px"></i></div><div class="r c" style="border-radius:2px 2px 2px 2px;left:380.8px;top:1390px;width:10.1px;height:28px"><i style="border-radius:1px 1px 1px 1px"></i></div><div class="r c" style="border-radius:2px 2px 2px 2px;left:388.9px;top:1390px;width:14.2px;height:28px"><i style="border-radius:1px 1px 1px 1px"></i></div><div class="r c" style="border-radius:2px 2px 2px 2px;left:401.1px;top:1390px;width:7.6px;height:28px"><i style="border-radius:1px 1px 1px 1px"></i></div><div class="r c" style="border-radius:2px 2px 2px 2px;left:406.7px;top:1390px;width:16.2px;height:28px"><i style="border-radius:1px 1px 1px 1px"></i></div><div class="r c" style="border-radius:2px 2px 2px 2px;left:420.9px;top:1390px;width:7.8px;height:28px"><i style="border-radius:1px 1px 1px 1px"></i></div><div class="r c" style="border-radius:2px 2px 2px 2px;left:426.7px;top:1390px;width:10.2px;height:28px"><i style="border-radius:1px 1px 1px 1px"></i></div><div class="r c" style="border-radius:2px 3.5px 2px 2px;left:434.9px;top:1390px;width:17.9px;height:28px"><i style="border-radius:1px 2.5px 2.5px 1px"></i></div><div class="r c" style="border-radius:3.5px 2px 2px 2px;left:468.6px;top:1390px;width:16.1px;height:28px"><i style="border-radius:2.5px 1px 1px 2.5px"></i></div><div class="r c" style="border-radius:2px 2px 2px 2px;left:482.7px;top:1390px;width:14.2px;height:28px"><i style="border-radius:1px 1px 1px 1px"></i></div><div class="r c" style="border-radius:2px 2px 2px 2px;left:494.9px;top:1390px;width:8px;height:28px"><i style="border-radius:1px 1px 1px 1px"></i></div><div class="r c" style="border-radius:2px 2px 2px 2px;left:500.9px;top:1390px;width:10.1px;height:28px"><i style="border-radius:1px 1px 1px 1px"></i></div><div class="r c" style="border-radius:2px 2px 2px 2px;left:509px;top:1390px;width:15.8px;height:28px"><i style="border-radius:1px 1px 1px 1px"></i></div><div class="r c" style="border-radius:2px 2px 2px 2px;left:522.8px;top:1390px;width:14px;height:28px"><i style="border-radius:1px 1px 1px 1px"></i></div><div class="r c" style="border-radius:2px 2px 2px 2px;left:534.8px;top:1390px;width:15.8px;height:28px"><i style="border-radius:1px 1px 1px 1px"></i></div><div class="r c" style="border-radius:2px 2px 2px 2px;left:548.6px;top:1390px;width:6.1px;height:28px"><i style="border-radius:1px 1px 1px 1px"></i></div><div class="r c" style="border-radius:2px 2px 2px 2px;left:552.7px;top:1390px;width:10.1px;height:28px"><i style="border-radius:1px 1px 1px 1px"></i></div><div class="r c" style="border-radius:2px 2px 2px 2px;left:560.8px;top:1390px;width:18px;height:28px"><i style="border-radius:1px 1px 1px 1px"></i></div><div class="r c" style="border-radius:2px 2px 2px 2px;left:576.8px;top:1390px;width:12px;height:28px"><i style="border-radius:1px 1px 1px 1px"></i></div><div class="r c" style="border-radius:2px 2px 2px 2px;left:586.8px;top:1390px;width:12.2px;height:28px"><i style="border-radius:1px 1px 1px 1px"></i></div><div class="r c" style="border-radius:2px 2px 2px 2px;left:597px;top:1390px;width:9.7px;height:28px"><i style="border-radius:1px 1px 1px 1px"></i></div><div class="r c" style="border-radius:2px 2px 2px 2px;left:604.7px;top:1390px;width:14px;height:28px"><i style="border-radius:1px 1px 1px 1px"></i></div><div class="r c" style="border-radius:2px 2px 2px 2px;left:616.7px;top:1390px;width:12px;height:28px"><i style="border-radius:1px 1px 1px 1px"></i></div><div class="r c" style="border-radius:2px 2px 2px 2px;left:626.7px;top:1390px;width:14.2px;height:28px"><i style="border-radius:1px 1px 1px 1px"></i></div><div class="r c" style="border-radius:2px 2px 2px 2px;left:638.9px;top:1390px;width:11.9px;height:28px"><i style="border-radius:1px 1px 1px 1px"></i></div><div class="r c" style="border-radius:2px 2px 2px 2px;left:648.8px;top:1390px;width:10.1px;height:28px"><i style="border-radius:1px 1px 1px 1px"></i></div><div class="r c" style="border-radius:2px 3.5px 2px 2px;left:656.9px;top:1390px;width:16.7px;height:28px"><i style="border-radius:1px 2.5px 2.5px 1px"></i></div><div style="left:19.5px;top:2px;font-size:22px;font-weight:bold;color:#b4f5ba;line-height:26px;letter-spacing:0;-webkit-text-stroke:0">MASTER</div><div style="left:2066.5px;top:2px;font-size:22px;font-weight:bold;color:#b4f5ba;line-height:26px;letter-spacing:0;-webkit-text-stroke:0">MASTER</div><div style="left:0;top:0;width:2424px;height:7px;background:linear-gradient(rgba(0,0,0,.45),rgba(0,0,0,0))"></div><div style="left:0;top:0;width:16px;height:1480px;background:linear-gradient(90deg,rgba(0,0,0,.4),rgba(0,0,0,0))"></div></div><div style="left:2830px;top:80px;width:20px;height:1480px;background:linear-gradient(90deg,#232824,#2a302b)"></div><div style="left:2858px;top:86px;width:16px;height:1254px;border-radius:8px;background:#6e6e6e"></div><svg style="position:absolute;left:407px;top:43px" width="37" height="38"><path d="M1 7a6 6 0 0 1 6-6h22a6 6 0 0 1 6 6v12L18 35.500 1 19z" fill="#ababab"/></svg><div style="left:424px;top:49.500px;width:2.300px;height:1510.500px;background:#fff"></div><div id="hd"><div style="left:40px;top:0;width:2px;height:1480px;background:#414141"></div><div style="left:42px;top:0;width:364px;height:1480px;background:#565757"></div><div style="left:66px;top:27px;width:360px;height:1500px;border:2px solid #454545;border-radius:19px 0 0 0;background:#585858"></div><div class="n" style="top:0px;height:28px;line-height:30px">1</div><div class="nm" style="left:103px;top:0px;height:27px;line-height:30px"><span style="letter-spacing:-.6px">MASTER</span></div><div class="dot" style="top:5.5px"></div><div class="hl" style="left:0;top:26px;width:40px"></div><div class="n" style="top:28px;height:28px;line-height:30px">2</div><div class="nm" style="left:103px;top:28px;height:27px;line-height:30px">Tube 1</div><div class="dot" style="top:33.5px"></div><div class="hl" style="left:0;top:54px;width:40px"></div><div class="hl" style="left:68px;top:54px;width:338px"></div><div class="n" style="top:56px;height:28px;line-height:30px">3</div><div class="nm" style="left:103px;top:56px;height:27px;line-height:30px">Tube 2</div><div class="dot" style="top:61.5px"></div><div class="hl" style="left:0;top:82px;width:40px"></div><div class="hl" style="left:68px;top:82px;width:338px"></div><div class="n" style="top:84px;height:28px;line-height:30px">4</div><div class="nm" style="left:103px;top:84px;height:27px;line-height:30px">Tube 3</div><div class="dot" style="top:89.5px"></div><div class="hl" style="left:0;top:110px;width:40px"></div><div class="hl" style="left:68px;top:110px;width:338px"></div><div class="n" style="top:112px;height:28px;line-height:30px">5</div><div class="nm" style="left:103px;top:112px;height:27px;line-height:30px">Tube 4</div><div class="dot" style="top:117.5px"></div><div class="hl" style="left:0;top:138px;width:40px"></div><div class="hl" style="left:68px;top:138px;width:338px"></div><div class="n" style="top:140px;height:98px;line-height:100px">6</div><div class="nm" style="left:87px;top:150px;height:30px;line-height:30px">Lead 1</div><div class="dot" style="top:200px"></div><div class="hl" style="left:0;top:236px;width:40px"></div><div class="hl" style="left:68px;top:236px;width:338px"></div><div class="n" style="top:238px;height:28px;line-height:30px">7</div><div class="nm" style="left:103px;top:238px;height:27px;line-height:30px">Lead 2</div><div class="dot" style="top:243.5px"></div><div class="hl" style="left:0;top:264px;width:40px"></div><div class="hl" style="left:68px;top:264px;width:338px"></div><div class="n" style="top:266px;height:92px;line-height:94px">8</div><div class="nm" style="left:103px;top:296px;height:30px;line-height:30px">Lead 3</div><div class="dot" style="top:301.8px"></div><div class="hl" style="left:0;top:356px;width:40px"></div><div class="hl" style="left:68px;top:356px;width:338px"></div><div class="n" style="top:358px;height:28px;line-height:30px">9</div><div class="nm" style="left:103px;top:358px;height:27px;line-height:30px">Kick</div><div class="dot" style="top:363.5px"></div><div class="hl" style="left:0;top:384px;width:40px"></div><div class="hl" style="left:68px;top:384px;width:338px"></div><div class="n" style="top:386px;height:28px;line-height:30px">10</div><div class="nm" style="left:103px;top:386px;height:27px;line-height:30px">Crash</div><div class="dot" style="top:391.5px"></div><div class="hl" style="left:0;top:412px;width:40px"></div><div class="hl" style="left:68px;top:412px;width:338px"></div><div class="n" style="top:414px;height:28px;line-height:30px">11</div><div class="nm" style="left:103px;top:414px;height:27px;line-height:30px">Huge snare</div><div class="dot" style="top:419.5px"></div><div class="hl" style="left:0;top:440px;width:40px"></div><div class="hl" style="left:68px;top:440px;width:338px"></div><div class="n" style="top:442px;height:28px;line-height:30px">12</div><div class="nm" style="left:103px;top:442px;height:27px;line-height:30px">Snap</div><div class="dot" style="top:447.5px"></div><div class="hl" style="left:0;top:468px;width:40px"></div><div class="hl" style="left:68px;top:468px;width:338px"></div><div class="n" style="top:470px;height:28px;line-height:30px">13</div><div class="nm" style="left:103px;top:470px;height:27px;line-height:30px">Fills long</div><div class="dot" style="top:475.5px"></div><div class="hl" style="left:0;top:496px;width:40px"></div><div class="hl" style="left:68px;top:496px;width:338px"></div><div class="n" style="top:498px;height:130px;line-height:132px">14</div><div class="nm" style="left:87px;top:523px;height:30px;line-height:30px">Arp</div><div class="dot" style="top:574px"></div><div class="hl" style="left:0;top:626px;width:40px"></div><div class="hl" style="left:68px;top:626px;width:338px"></div><div class="n" style="top:628px;height:98px;line-height:100px">15</div><div class="nm" style="left:87px;top:638px;height:30px;line-height:30px">Pluck</div><div class="dot" style="top:688px"></div><div class="hl" style="left:0;top:724px;width:40px"></div><div class="hl" style="left:68px;top:724px;width:338px"></div><div class="n" style="top:726px;height:28px;line-height:30px">16</div><div class="nm" style="left:103px;top:726px;height:27px;line-height:30px">Bass 3</div><div class="dot" style="top:731.5px"></div><div class="hl" style="left:0;top:752px;width:40px"></div><div class="hl" style="left:68px;top:752px;width:338px"></div><div class="n" style="top:754px;height:28px;line-height:30px">17</div><div class="nm" style="left:103px;top:754px;height:27px;line-height:30px">Piano</div><div class="dot" style="top:759.5px"></div><div class="hl" style="left:0;top:780px;width:40px"></div><div class="hl" style="left:68px;top:780px;width:338px"></div><div class="n" style="top:782px;height:28px;line-height:30px">18</div><div class="nm" style="left:103px;top:782px;height:27px;line-height:30px">Strings</div><div class="dot" style="top:787.5px"></div><div class="hl" style="left:0;top:808px;width:40px"></div><div class="hl" style="left:68px;top:808px;width:338px"></div><div class="n" style="top:810px;height:80px;line-height:82px">19</div><div class="nm" style="left:103px;top:834px;height:30px;line-height:30px">Reese.aupreset</div><div class="dot" style="top:839.8px"></div><div class="hl" style="left:0;top:888px;width:40px"></div><div class="hl" style="left:68px;top:888px;width:338px"></div><div class="n" style="top:890px;height:80px;line-height:82px">20</div><div class="nm" style="left:103px;top:914px;height:30px;line-height:30px">Chords</div><div class="dot" style="top:919.8px"></div><div class="hl" style="left:0;top:968px;width:40px"></div><div class="hl" style="left:68px;top:968px;width:338px"></div><div class="n" style="top:970px;height:28px;line-height:30px">21</div><div class="nm" style="left:103px;top:970px;height:27px;line-height:30px">Sub bass</div><div class="dot" style="top:975.5px"></div><div class="hl" style="left:0;top:996px;width:40px"></div><div class="hl" style="left:68px;top:996px;width:338px"></div><div class="n" style="top:998px;height:28px;line-height:30px">22</div><div class="nm" style="left:103px;top:998px;height:27px;line-height:30px">Fx 1</div><div class="dot" style="top:1003.5px"></div><div class="hl" style="left:0;top:1024px;width:40px"></div><div class="hl" style="left:68px;top:1024px;width:338px"></div><div class="n" style="top:1026px;height:28px;line-height:30px">23</div><div class="nm" style="left:103px;top:1026px;height:27px;line-height:30px">Fx 2</div><div class="dot" style="top:1031.5px"></div><div class="hl" style="left:0;top:1052px;width:40px"></div><div class="hl" style="left:68px;top:1052px;width:338px"></div><div class="n" style="top:1054px;height:28px;line-height:30px">24</div><div class="nm" style="left:103px;top:1054px;height:27px;line-height:30px">Fx 3</div><div class="dot" style="top:1059.5px"></div><div class="hl" style="left:0;top:1080px;width:40px"></div><div class="hl" style="left:68px;top:1080px;width:338px"></div><div class="n" style="top:1082px;height:28px;line-height:30px">25</div><div class="nm" style="left:103px;top:1082px;height:27px;line-height:30px">Fx 4</div><div class="dot" style="top:1087.5px"></div><div class="hl" style="left:0;top:1108px;width:40px"></div><div class="hl" style="left:68px;top:1108px;width:338px"></div><div class="n" style="top:1110px;height:28px;line-height:30px">26</div><div class="nm" style="left:103px;top:1110px;height:27px;line-height:30px">Fx 5</div><div class="dot" style="top:1115.5px"></div><div class="hl" style="left:0;top:1136px;width:40px"></div><div class="hl" style="left:68px;top:1136px;width:338px"></div><div class="n" style="top:1138px;height:28px;line-height:30px">27</div><div class="nm" style="left:103px;top:1138px;height:27px;line-height:30px">Fx 6</div><div class="dot" style="top:1143.5px"></div><div class="hl" style="left:0;top:1164px;width:40px"></div><div class="hl" style="left:68px;top:1164px;width:338px"></div><div class="n" style="top:1166px;height:28px;line-height:30px">28</div><div class="nm" style="left:103px;top:1166px;height:27px;line-height:30px">Fx 7</div><div class="dot" style="top:1171.5px"></div><div class="hl" style="left:0;top:1192px;width:40px"></div><div class="hl" style="left:68px;top:1192px;width:338px"></div><div class="n" style="top:1194px;height:28px;line-height:30px">29</div><div class="nm" style="left:103px;top:1194px;height:27px;line-height:30px">Fx 8</div><div class="dot" style="top:1199.5px"></div><div class="hl" style="left:0;top:1220px;width:40px"></div><div class="hl" style="left:68px;top:1220px;width:338px"></div><div class="n" style="top:1222px;height:28px;line-height:30px">30</div><div class="nm" style="left:103px;top:1222px;height:27px;line-height:30px">Fx 9</div><div class="dot" style="top:1227.5px"></div><div class="hl" style="left:0;top:1248px;width:40px"></div><div class="hl" style="left:68px;top:1248px;width:338px"></div><div class="n" style="top:1250px;height:28px;line-height:30px">31</div><div class="nm" style="left:103px;top:1250px;height:27px;line-height:30px">Fx 10</div><div class="dot" style="top:1255.5px"></div><div class="hl" style="left:0;top:1276px;width:40px"></div><div class="hl" style="left:68px;top:1276px;width:338px"></div><div class="n" style="top:1278px;height:28px;line-height:30px">32</div><div class="nm" style="left:103px;top:1278px;height:27px;line-height:30px">Fx 11</div><div class="dot" style="top:1283.5px"></div><div class="hl" style="left:0;top:1304px;width:40px"></div><div class="hl" style="left:68px;top:1304px;width:338px"></div><div class="n" style="top:1306px;height:28px;line-height:30px">33</div><div class="nm" style="left:103px;top:1306px;height:27px;line-height:30px">Fx 12</div><div class="dot" style="top:1311.5px"></div><div class="hl" style="left:0;top:1332px;width:40px"></div><div class="hl" style="left:68px;top:1332px;width:338px"></div><div class="n" style="top:1334px;height:28px;line-height:30px">34</div><div class="nm" style="left:103px;top:1334px;height:27px;line-height:30px">DAL<span style="position:relative;top:-2.500px">_</span>voc...akes<span style="position:relative;top:-2.500px">_</span>F 1</div><div class="dot" style="top:1339.5px"></div><div class="hl" style="left:0;top:1360px;width:40px"></div><div class="hl" style="left:68px;top:1360px;width:338px"></div><div class="n" style="top:1362px;height:28px;line-height:30px">35</div><div class="nm" style="left:103px;top:1362px;height:27px;line-height:30px">DAL<span style="position:relative;top:-2.500px">_</span>voc...akes<span style="position:relative;top:-2.500px">_</span>F 2</div><div class="dot" style="top:1367.5px"></div><div class="hl" style="left:0;top:1388px;width:40px"></div><div class="hl" style="left:68px;top:1388px;width:338px"></div><div class="n" style="top:1390px;height:28px;line-height:30px">36</div><div class="nm" style="left:103px;top:1390px;height:27px;line-height:30px">Percussions</div><div class="dot" style="top:1395.5px"></div><div class="hl" style="left:0;top:1416px;width:40px"></div><div class="hl" style="left:68px;top:1416px;width:338px"></div><div class="n" style="top:1418px;height:28px;line-height:30px">37</div><div class="nm" style="left:103px;top:1418px;height:27px;line-height:30px">Bass 1</div><div class="dot" style="top:1423.5px"></div><div class="hl" style="left:0;top:1444px;width:40px"></div><div class="hl" style="left:68px;top:1444px;width:338px"></div><div class="n" style="top:1446px;height:28px;line-height:30px">38</div><div class="nm" style="left:103px;top:1446px;height:27px;line-height:30px">Bass 2</div><div class="dot" style="top:1451.5px"></div><div class="hl" style="left:0;top:1472px;width:40px"></div><div class="hl" style="left:68px;top:1472px;width:338px"></div><div class="n" style="top:1474px;height:28px;line-height:30px">39</div><div class="nm" style="left:103px;top:1474px;height:27px;line-height:30px">Bass high</div><div class="dot" style="top:1479.5px"></div><svg style="position:absolute;left:62px;top:3px" width="28" height="20"><path d="M4 5l9.500 10L23 5" stroke="#f4f4f4" stroke-width="2.200" fill="none"/></svg><div style="left:0;top:0;width:406px;height:6px;background:linear-gradient(rgba(0,0,0,.35),rgba(0,0,0,0))"></div></div><div style="left:405px;top:80px;width:2px;height:1510px;background:#2f2f2f"></div><div style="left:0;top:1560px;width:2850px;height:30px;background:#383838"></div><div style="left:405px;top:1560px;width:2px;height:30px;background:#2d2d2d"></div></body></html>
